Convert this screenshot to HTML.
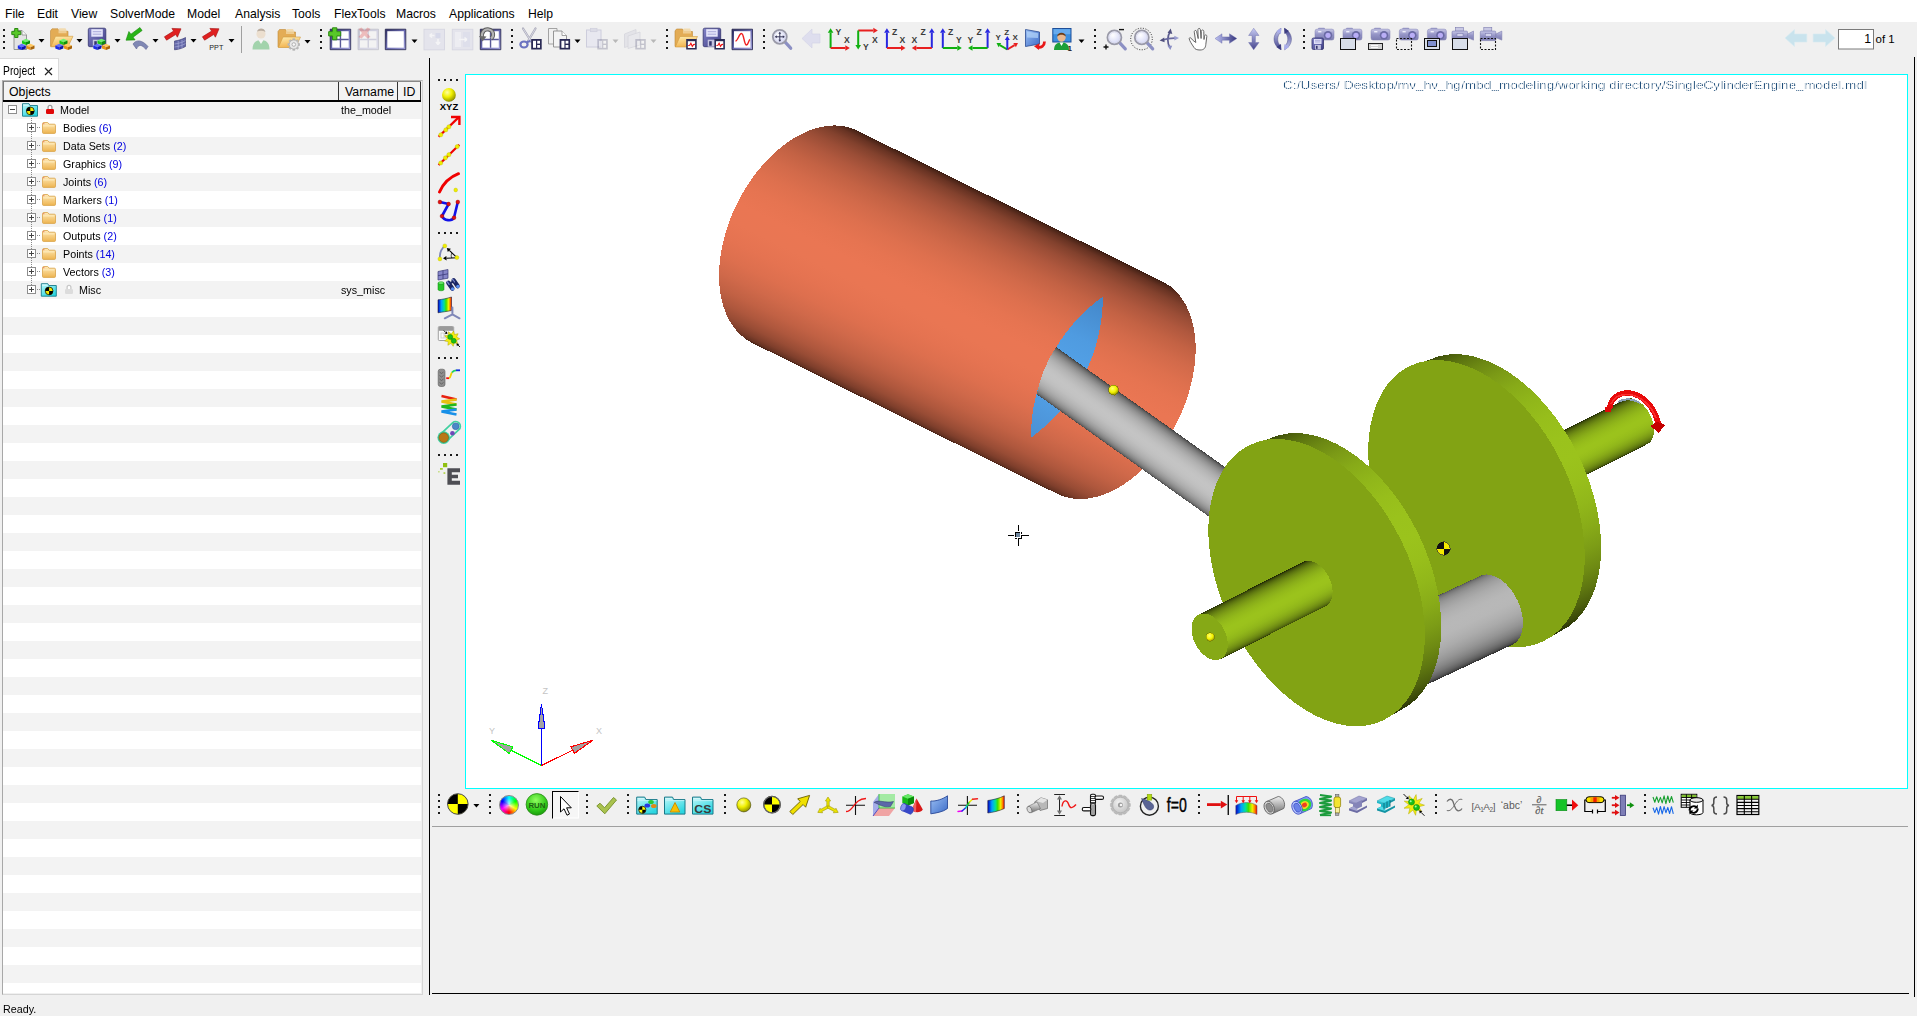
<!DOCTYPE html><html><head><meta charset="utf-8"><title>MotionView</title><style>
html,body{margin:0;padding:0;overflow:hidden;}
body{width:1917px;height:1016px;overflow:hidden;background:#f0f0f0;font-family:"Liberation Sans",sans-serif;position:relative;color:#000;}
.abs{position:absolute;}
.menubar{position:absolute;left:0;top:0;width:1917px;height:22px;background:#fff;}
.menubar span{position:absolute;top:6px;font-size:12.2px;line-height:16px;white-space:nowrap;color:#000;}
.tab{position:absolute;left:0;top:58px;width:59px;height:22px;background:#fff;border-right:1px solid #dadada;border-top:1px solid #dadada;box-sizing:border-box;}
.tab span{position:absolute;left:3px;top:5px;font-size:11.9px;line-height:14px;transform:scaleX(0.87);transform-origin:0 50%;}
.panel{position:absolute;left:2px;top:80px;width:421px;height:915px;border:1px solid #d5d5d5;border-left-color:#a8a8a8;border-top-color:#b8b8b8;box-sizing:border-box;background:#f0f0f0;}
.tree{position:absolute;left:3px;top:81px;width:418px;height:912px;background:repeating-linear-gradient(to bottom,#f3f3f3 0,#f3f3f3 18px,#fff 18px,#fff 36px);background-position:0 20px;}
.hdr{position:absolute;left:3px;top:81px;width:418px;height:19px;background:#f3f3f3;border-bottom:2px solid #000;box-sizing:content-box;}
.row{position:absolute;left:0;height:18px;font-size:11.8px;line-height:18px;white-space:nowrap;}
.row span{position:absolute;top:0;transform:scaleX(0.91);transform-origin:0 50%;}
.cnt{color:#0000e0;}
.status{position:absolute;left:3px;top:1003px;font-size:11.8px;line-height:13px;height:13px;transform:scaleX(0.91);transform-origin:0 50%;}
</style></head><body>
<div class="menubar">
<span style="left:5px">File</span>
<span style="left:37px">Edit</span>
<span style="left:71px">View</span>
<span style="left:110px">SolverMode</span>
<span style="left:187px">Model</span>
<span style="left:235px">Analysis</span>
<span style="left:292px">Tools</span>
<span style="left:334px">FlexTools</span>
<span style="left:396px">Macros</span>
<span style="left:449px">Applications</span>
<span style="left:528px">Help</span>
</div>
<div class="tab"><span>Project</span><svg class="abs" style="left:44px;top:8px" width="9" height="9"><path d="M1 1L8 8M8 1L1 8" stroke="#222" stroke-width="1.2" fill="none"/></svg></div>
<div class="panel"></div><div class="tree"></div>
<div class="hdr"></div>
<div class="abs" style="left:3px;top:81px;width:418px;height:1px;background:#888"></div>
<div class="abs" style="left:3px;top:81px;width:1px;height:19px;background:#777"></div>
<div class="abs" style="left:338px;top:82px;width:1px;height:18px;background:#333"></div>
<div class="abs" style="left:397px;top:82px;width:1px;height:18px;background:#333"></div>
<div class="abs" style="left:420px;top:82px;width:1px;height:18px;background:#333"></div>
<div class="abs" style="left:9px;top:85px;font-size:12.3px;line-height:15px">Objects</div>
<div class="abs" style="left:345px;top:85px;font-size:12.3px;line-height:15px">Varname</div>
<div class="abs" style="left:403px;top:85px;font-size:12.3px;line-height:15px">ID</div>
<div class="row" style="top:101px"><span style="left:60px">Model</span><span style="left:341px">the_model</span></div>
<div class="row" style="top:119px"><span style="left:63px">Bodies <b class="cnt" style="font-weight:normal">(6)</b></span></div>
<div class="row" style="top:137px"><span style="left:63px">Data Sets <b class="cnt" style="font-weight:normal">(2)</b></span></div>
<div class="row" style="top:155px"><span style="left:63px">Graphics <b class="cnt" style="font-weight:normal">(9)</b></span></div>
<div class="row" style="top:173px"><span style="left:63px">Joints <b class="cnt" style="font-weight:normal">(6)</b></span></div>
<div class="row" style="top:191px"><span style="left:63px">Markers <b class="cnt" style="font-weight:normal">(1)</b></span></div>
<div class="row" style="top:209px"><span style="left:63px">Motions <b class="cnt" style="font-weight:normal">(1)</b></span></div>
<div class="row" style="top:227px"><span style="left:63px">Outputs <b class="cnt" style="font-weight:normal">(2)</b></span></div>
<div class="row" style="top:245px"><span style="left:63px">Points <b class="cnt" style="font-weight:normal">(14)</b></span></div>
<div class="row" style="top:263px"><span style="left:63px">Vectors <b class="cnt" style="font-weight:normal">(3)</b></span></div>
<div class="row" style="top:281px"><span style="left:79px">Misc</span><span style="left:341px">sys_misc</span></div>
<svg class="abs" style="left:0;top:0" width="430" height="320" viewBox="0 0 430 320"><defs><linearGradient id="gtfold" x1="0" y1="0" x2="0" y2="1"><stop offset="0" stop-color="#ffeab8"/><stop offset="1" stop-color="#eeb450"/></linearGradient><linearGradient id="gcyanf" x1="0" y1="0" x2="0.6" y2="1"><stop offset="0" stop-color="#c0f8fa"/><stop offset="1" stop-color="#2cd6e0"/></linearGradient></defs><path d="M31.500 118 V286" stroke="#8a8a8a" stroke-width="1" stroke-dasharray="1 1"/><rect x="8.5" y="105.5" width="8" height="8" fill="#fff" stroke="#8e8e8e" stroke-width="1"/><path d="M10 109.5 h5" stroke="#444" stroke-width="1"/><path d="M22.5 103.7 h6.500 l1 1.800 h7.500 v10.700 h-15z" fill="url(#gcyanf)" stroke="#1a7a8a" stroke-width="0.900"/><path d="M23.3 104.5 h5 l0.800 1.500 h-5.800z" fill="#c8f4f8"/><circle cx="30.3" cy="110.9" r="3.9" fill="#f4e800"/><path d="M30.3 110.9 L26.400000000000002 110.9 A3.9 3.9 0 0 1 30.3 107.0 Z M30.3 110.9 L34.2 110.9 A3.9 3.9 0 0 1 30.3 114.80000000000001 Z" fill="#000"/><circle cx="30.3" cy="110.9" r="3.9" fill="none" stroke="#000" stroke-width="0.700"/><g opacity="1"><path d="M48.099999999999994 109.6 v-2.300 a1.900 2 0 0 1 3.800 0 v2.300" fill="#fff" stroke="#9c9c9c" stroke-width="1.300"/><rect x="46.0" y="108.89999999999999" width="8" height="5.200" rx="1.300" fill="#e00808"/></g><rect x="37" y="127" width="1" height="1" fill="#8a8a8a"/><rect x="39" y="127" width="1" height="1" fill="#8a8a8a"/><rect x="27.5" y="123.5" width="8" height="8" fill="#fff" stroke="#8e8e8e" stroke-width="1"/><path d="M29 127.5 h5" stroke="#444" stroke-width="1"/><path d="M31.5 125 v5" stroke="#444" stroke-width="1"/><path d="M42.5 123.9 q0 -1.400 1.400 -1.400 h3.800 l1.400 1.700 h5.200 q1.200 0 1.200 1.200 v7 q0 1 -1 1 h-11 q-1 0 -1 -1z" fill="url(#gtfold)" stroke="#d8a248" stroke-width="0.800"/><path d="M43.2 125.9 h11" stroke="#fff2cc" stroke-width="0.800"/><rect x="43.3" y="123.2" width="1" height="1" fill="#e05050"/><rect x="37" y="145" width="1" height="1" fill="#8a8a8a"/><rect x="39" y="145" width="1" height="1" fill="#8a8a8a"/><rect x="27.5" y="141.5" width="8" height="8" fill="#fff" stroke="#8e8e8e" stroke-width="1"/><path d="M29 145.5 h5" stroke="#444" stroke-width="1"/><path d="M31.5 143 v5" stroke="#444" stroke-width="1"/><path d="M42.5 141.9 q0 -1.400 1.400 -1.400 h3.800 l1.400 1.700 h5.200 q1.200 0 1.200 1.200 v7 q0 1 -1 1 h-11 q-1 0 -1 -1z" fill="url(#gtfold)" stroke="#d8a248" stroke-width="0.800"/><path d="M43.2 143.9 h11" stroke="#fff2cc" stroke-width="0.800"/><rect x="43.3" y="141.2" width="1" height="1" fill="#e05050"/><rect x="37" y="163" width="1" height="1" fill="#8a8a8a"/><rect x="39" y="163" width="1" height="1" fill="#8a8a8a"/><rect x="27.5" y="159.5" width="8" height="8" fill="#fff" stroke="#8e8e8e" stroke-width="1"/><path d="M29 163.5 h5" stroke="#444" stroke-width="1"/><path d="M31.5 161 v5" stroke="#444" stroke-width="1"/><path d="M42.5 159.9 q0 -1.400 1.400 -1.400 h3.800 l1.400 1.700 h5.200 q1.200 0 1.200 1.200 v7 q0 1 -1 1 h-11 q-1 0 -1 -1z" fill="url(#gtfold)" stroke="#d8a248" stroke-width="0.800"/><path d="M43.2 161.9 h11" stroke="#fff2cc" stroke-width="0.800"/><rect x="43.3" y="159.2" width="1" height="1" fill="#e05050"/><rect x="37" y="181" width="1" height="1" fill="#8a8a8a"/><rect x="39" y="181" width="1" height="1" fill="#8a8a8a"/><rect x="27.5" y="177.5" width="8" height="8" fill="#fff" stroke="#8e8e8e" stroke-width="1"/><path d="M29 181.5 h5" stroke="#444" stroke-width="1"/><path d="M31.5 179 v5" stroke="#444" stroke-width="1"/><path d="M42.5 177.9 q0 -1.400 1.400 -1.400 h3.800 l1.400 1.700 h5.200 q1.200 0 1.200 1.200 v7 q0 1 -1 1 h-11 q-1 0 -1 -1z" fill="url(#gtfold)" stroke="#d8a248" stroke-width="0.800"/><path d="M43.2 179.9 h11" stroke="#fff2cc" stroke-width="0.800"/><rect x="43.3" y="177.2" width="1" height="1" fill="#e05050"/><rect x="37" y="199" width="1" height="1" fill="#8a8a8a"/><rect x="39" y="199" width="1" height="1" fill="#8a8a8a"/><rect x="27.5" y="195.5" width="8" height="8" fill="#fff" stroke="#8e8e8e" stroke-width="1"/><path d="M29 199.5 h5" stroke="#444" stroke-width="1"/><path d="M31.5 197 v5" stroke="#444" stroke-width="1"/><path d="M42.5 195.9 q0 -1.400 1.400 -1.400 h3.800 l1.400 1.700 h5.200 q1.200 0 1.200 1.200 v7 q0 1 -1 1 h-11 q-1 0 -1 -1z" fill="url(#gtfold)" stroke="#d8a248" stroke-width="0.800"/><path d="M43.2 197.9 h11" stroke="#fff2cc" stroke-width="0.800"/><rect x="43.3" y="195.2" width="1" height="1" fill="#e05050"/><rect x="37" y="217" width="1" height="1" fill="#8a8a8a"/><rect x="39" y="217" width="1" height="1" fill="#8a8a8a"/><rect x="27.5" y="213.5" width="8" height="8" fill="#fff" stroke="#8e8e8e" stroke-width="1"/><path d="M29 217.5 h5" stroke="#444" stroke-width="1"/><path d="M31.5 215 v5" stroke="#444" stroke-width="1"/><path d="M42.5 213.9 q0 -1.400 1.400 -1.400 h3.800 l1.400 1.700 h5.200 q1.200 0 1.200 1.200 v7 q0 1 -1 1 h-11 q-1 0 -1 -1z" fill="url(#gtfold)" stroke="#d8a248" stroke-width="0.800"/><path d="M43.2 215.9 h11" stroke="#fff2cc" stroke-width="0.800"/><rect x="43.3" y="213.2" width="1" height="1" fill="#e05050"/><rect x="37" y="235" width="1" height="1" fill="#8a8a8a"/><rect x="39" y="235" width="1" height="1" fill="#8a8a8a"/><rect x="27.5" y="231.5" width="8" height="8" fill="#fff" stroke="#8e8e8e" stroke-width="1"/><path d="M29 235.5 h5" stroke="#444" stroke-width="1"/><path d="M31.5 233 v5" stroke="#444" stroke-width="1"/><path d="M42.5 231.9 q0 -1.400 1.400 -1.400 h3.800 l1.400 1.700 h5.200 q1.200 0 1.200 1.200 v7 q0 1 -1 1 h-11 q-1 0 -1 -1z" fill="url(#gtfold)" stroke="#d8a248" stroke-width="0.800"/><path d="M43.2 233.9 h11" stroke="#fff2cc" stroke-width="0.800"/><rect x="43.3" y="231.2" width="1" height="1" fill="#e05050"/><rect x="37" y="253" width="1" height="1" fill="#8a8a8a"/><rect x="39" y="253" width="1" height="1" fill="#8a8a8a"/><rect x="27.5" y="249.5" width="8" height="8" fill="#fff" stroke="#8e8e8e" stroke-width="1"/><path d="M29 253.5 h5" stroke="#444" stroke-width="1"/><path d="M31.5 251 v5" stroke="#444" stroke-width="1"/><path d="M42.5 249.9 q0 -1.400 1.400 -1.400 h3.800 l1.400 1.700 h5.200 q1.200 0 1.200 1.200 v7 q0 1 -1 1 h-11 q-1 0 -1 -1z" fill="url(#gtfold)" stroke="#d8a248" stroke-width="0.800"/><path d="M43.2 251.9 h11" stroke="#fff2cc" stroke-width="0.800"/><rect x="43.3" y="249.2" width="1" height="1" fill="#e05050"/><rect x="37" y="271" width="1" height="1" fill="#8a8a8a"/><rect x="39" y="271" width="1" height="1" fill="#8a8a8a"/><rect x="27.5" y="267.5" width="8" height="8" fill="#fff" stroke="#8e8e8e" stroke-width="1"/><path d="M29 271.5 h5" stroke="#444" stroke-width="1"/><path d="M31.5 269 v5" stroke="#444" stroke-width="1"/><path d="M42.5 267.9 q0 -1.400 1.400 -1.400 h3.800 l1.400 1.700 h5.200 q1.200 0 1.200 1.200 v7 q0 1 -1 1 h-11 q-1 0 -1 -1z" fill="url(#gtfold)" stroke="#d8a248" stroke-width="0.800"/><path d="M43.2 269.9 h11" stroke="#fff2cc" stroke-width="0.800"/><rect x="43.3" y="267.2" width="1" height="1" fill="#e05050"/><rect x="37" y="289" width="1" height="1" fill="#8a8a8a"/><rect x="39" y="289" width="1" height="1" fill="#8a8a8a"/><rect x="27.5" y="285.5" width="8" height="8" fill="#fff" stroke="#8e8e8e" stroke-width="1"/><path d="M29 289.5 h5" stroke="#444" stroke-width="1"/><path d="M31.5 287 v5" stroke="#444" stroke-width="1"/><path d="M41.3 283.7 h6.500 l1 1.800 h7.500 v10.700 h-15z" fill="url(#gcyanf)" stroke="#1a7a8a" stroke-width="0.900"/><path d="M42.099999999999994 284.5 h5 l0.800 1.500 h-5.800z" fill="#c8f4f8"/><circle cx="49.099999999999994" cy="290.9" r="3.9" fill="#f4e800"/><path d="M49.099999999999994 290.9 L45.199999999999996 290.9 A3.9 3.9 0 0 1 49.099999999999994 287.0 Z M49.099999999999994 290.9 L52.99999999999999 290.9 A3.9 3.9 0 0 1 49.099999999999994 294.79999999999995 Z" fill="#000"/><circle cx="49.099999999999994" cy="290.9" r="3.9" fill="none" stroke="#000" stroke-width="0.700"/><g opacity="1"><path d="M67.1 289.6 v-2.300 a1.900 2 0 0 1 3.800 0 v2.300" fill="#fff" stroke="#c8c8c8" stroke-width="1.300"/><rect x="65.0" y="288.90000000000003" width="8" height="5.200" rx="1.300" fill="#dcdcdc"/></g></svg>
<div class="abs" style="left:429px;top:58px;width:1px;height:937px;background:#000"></div>
<div class="abs" style="left:1914px;top:57px;width:1px;height:940px;background:#000"></div>
<div class="abs" style="left:432px;top:993px;width:1477px;height:1px;background:#000"></div>
<div class="abs" style="left:432px;top:826px;width:1476px;height:1px;background:#a0a0a0"></div>
<div class="abs" style="left:465px;top:74px;width:1443px;height:715px;box-sizing:border-box;border:1px solid #00ffff;background:#fff;overflow:hidden">
<svg class="abs" style="left:-466px;top:-75px" width="1917" height="1016" viewBox="0 0 1917 1016" shape-rendering="crispEdges">
<defs><linearGradient id="gcyl" gradientUnits="userSpaceOnUse" x1="1010.0" y1="206.1" x2="904.7" y2="418.4"><stop offset="0.0" stop-color="#3a1c12"/><stop offset="0.0062" stop-color="#4b2518"/><stop offset="0.0245" stop-color="#683323"/><stop offset="0.0545" stop-color="#82412d"/><stop offset="0.0955" stop-color="#9a4d36"/><stop offset="0.1464" stop-color="#b0583e"/><stop offset="0.2061" stop-color="#c36244"/><stop offset="0.273" stop-color="#d26a4a"/><stop offset="0.3455" stop-color="#de704e"/><stop offset="0.4218" stop-color="#e67451"/><stop offset="0.5" stop-color="#ea7653"/><stop offset="0.5782" stop-color="#e97653"/><stop offset="0.6545" stop-color="#e57351"/><stop offset="0.727" stop-color="#dd6f4e"/><stop offset="0.7939" stop-color="#d0694a"/><stop offset="0.8536" stop-color="#c16144"/><stop offset="0.9045" stop-color="#ae573d"/><stop offset="0.9455" stop-color="#984c35"/><stop offset="0.9755" stop-color="#7f3f2c"/><stop offset="0.9938" stop-color="#653222"/><stop offset="1.0" stop-color="#482317"/></linearGradient><linearGradient id="grod" gradientUnits="userSpaceOnUse" x1="1060.9" y1="350.2" x2="1031.9" y2="391.0"><stop offset="0.0" stop-color="#2c2c2c"/><stop offset="0.0062" stop-color="#3e3e3e"/><stop offset="0.0245" stop-color="#565656"/><stop offset="0.0545" stop-color="#6d6d6d"/><stop offset="0.0955" stop-color="#818181"/><stop offset="0.1464" stop-color="#949494"/><stop offset="0.2061" stop-color="#a4a4a4"/><stop offset="0.273" stop-color="#b1b1b1"/><stop offset="0.3455" stop-color="#bababa"/><stop offset="0.4218" stop-color="#c1c1c1"/><stop offset="0.5" stop-color="#c4c4c4"/><stop offset="0.5782" stop-color="#c3c3c3"/><stop offset="0.6545" stop-color="#bfbfbf"/><stop offset="0.727" stop-color="#b7b7b7"/><stop offset="0.7939" stop-color="#adadad"/><stop offset="0.8536" stop-color="#9f9f9f"/><stop offset="0.9045" stop-color="#8e8e8e"/><stop offset="0.9455" stop-color="#7b7b7b"/><stop offset="0.9755" stop-color="#656565"/><stop offset="0.9938" stop-color="#4e4e4e"/><stop offset="1.0" stop-color="#353535"/></linearGradient><linearGradient id="glens" gradientUnits="userSpaceOnUse" x1="1102.8" y1="296.6" x2="1030.9" y2="437.8"><stop offset="0" stop-color="#4386c8"/><stop offset="0.3" stop-color="#4f9be0"/><stop offset="0.6" stop-color="#55a4ea"/><stop offset="1" stop-color="#4a90d4"/></linearGradient><linearGradient id="grim1" gradientUnits="userSpaceOnUse" x1="1258.5" y1="441.1" x2="1392.7" y2="716.1"><stop offset="0.0" stop-color="#283205"/><stop offset="0.0062" stop-color="#394809"/><stop offset="0.0245" stop-color="#4b5e0c"/><stop offset="0.0545" stop-color="#5c7410"/><stop offset="0.0955" stop-color="#6c8813"/><stop offset="0.1464" stop-color="#7b9a16"/><stop offset="0.2061" stop-color="#87aa18"/><stop offset="0.273" stop-color="#90b61a"/><stop offset="0.3455" stop-color="#97be1b"/><stop offset="0.4218" stop-color="#9ac21c"/><stop offset="0.5" stop-color="#9bc31c"/><stop offset="0.5782" stop-color="#98bf1b"/><stop offset="0.6545" stop-color="#91b71a"/><stop offset="0.727" stop-color="#88ab18"/><stop offset="0.7939" stop-color="#7c9c16"/><stop offset="0.8536" stop-color="#6e8a13"/><stop offset="0.9045" stop-color="#5e7610"/><stop offset="0.9455" stop-color="#4d600d"/><stop offset="0.9755" stop-color="#3b4a09"/><stop offset="0.9938" stop-color="#2a3406"/><stop offset="1.0" stop-color="#222a04"/></linearGradient><linearGradient id="grim2" gradientUnits="userSpaceOnUse" x1="1418.4" y1="362.2" x2="1552.6" y2="637.2"><stop offset="0.0" stop-color="#283205"/><stop offset="0.0062" stop-color="#394809"/><stop offset="0.0245" stop-color="#4b5e0c"/><stop offset="0.0545" stop-color="#5c7410"/><stop offset="0.0955" stop-color="#6c8813"/><stop offset="0.1464" stop-color="#7b9a16"/><stop offset="0.2061" stop-color="#87aa18"/><stop offset="0.273" stop-color="#90b61a"/><stop offset="0.3455" stop-color="#97be1b"/><stop offset="0.4218" stop-color="#9ac21c"/><stop offset="0.5" stop-color="#9bc31c"/><stop offset="0.5782" stop-color="#98bf1b"/><stop offset="0.6545" stop-color="#91b71a"/><stop offset="0.727" stop-color="#88ab18"/><stop offset="0.7939" stop-color="#7c9c16"/><stop offset="0.8536" stop-color="#6e8a13"/><stop offset="0.9045" stop-color="#5e7610"/><stop offset="0.9455" stop-color="#4d600d"/><stop offset="0.9755" stop-color="#3b4a09"/><stop offset="0.9938" stop-color="#2a3406"/><stop offset="1.0" stop-color="#222a04"/></linearGradient><linearGradient id="gls" gradientUnits="userSpaceOnUse" x1="1198.6" y1="614.6" x2="1220.8" y2="659.0"><stop offset="0.0" stop-color="#1e2604"/><stop offset="0.0062" stop-color="#293406"/><stop offset="0.0245" stop-color="#3c4c0a"/><stop offset="0.0545" stop-color="#4f630d"/><stop offset="0.0955" stop-color="#607911"/><stop offset="0.1464" stop-color="#708d14"/><stop offset="0.2061" stop-color="#7e9e16"/><stop offset="0.273" stop-color="#89ad19"/><stop offset="0.3455" stop-color="#92b81a"/><stop offset="0.4218" stop-color="#98bf1b"/><stop offset="0.5" stop-color="#9bc31c"/><stop offset="0.5782" stop-color="#9bc21c"/><stop offset="0.6545" stop-color="#97be1b"/><stop offset="0.727" stop-color="#91b71a"/><stop offset="0.7939" stop-color="#88ab18"/><stop offset="0.8536" stop-color="#7c9c16"/><stop offset="0.9045" stop-color="#6e8b13"/><stop offset="0.9455" stop-color="#5e7710"/><stop offset="0.9755" stop-color="#4d610d"/><stop offset="0.9938" stop-color="#3a4909"/><stop offset="1.0" stop-color="#273106"/></linearGradient><linearGradient id="grs" gradientUnits="userSpaceOnUse" x1="1625.9" y1="399.0" x2="1648.3" y2="443.6"><stop offset="0.0" stop-color="#1e2604"/><stop offset="0.0062" stop-color="#293406"/><stop offset="0.0245" stop-color="#3c4c0a"/><stop offset="0.0545" stop-color="#4f630d"/><stop offset="0.0955" stop-color="#607911"/><stop offset="0.1464" stop-color="#708d14"/><stop offset="0.2061" stop-color="#7e9e16"/><stop offset="0.273" stop-color="#89ad19"/><stop offset="0.3455" stop-color="#92b81a"/><stop offset="0.4218" stop-color="#98bf1b"/><stop offset="0.5" stop-color="#9bc31c"/><stop offset="0.5782" stop-color="#9bc21c"/><stop offset="0.6545" stop-color="#97be1b"/><stop offset="0.727" stop-color="#91b71a"/><stop offset="0.7939" stop-color="#88ab18"/><stop offset="0.8536" stop-color="#7c9c16"/><stop offset="0.9045" stop-color="#6e8b13"/><stop offset="0.9455" stop-color="#5e7710"/><stop offset="0.9755" stop-color="#4d610d"/><stop offset="0.9938" stop-color="#3a4909"/><stop offset="1.0" stop-color="#273106"/></linearGradient><linearGradient id="gpin" gradientUnits="userSpaceOnUse" x1="1480.9" y1="575.6" x2="1513.1" y2="644.4"><stop offset="0.0" stop-color="#4d4d4d"/><stop offset="0.0062" stop-color="#626262"/><stop offset="0.0245" stop-color="#757575"/><stop offset="0.0545" stop-color="#868686"/><stop offset="0.0955" stop-color="#959595"/><stop offset="0.1464" stop-color="#a1a1a1"/><stop offset="0.2061" stop-color="#ababab"/><stop offset="0.273" stop-color="#b2b2b2"/><stop offset="0.3455" stop-color="#b7b7b7"/><stop offset="0.4218" stop-color="#b8b8b8"/><stop offset="0.5" stop-color="#b7b7b7"/><stop offset="0.5782" stop-color="#b2b2b2"/><stop offset="0.6545" stop-color="#ababab"/><stop offset="0.727" stop-color="#a1a1a1"/><stop offset="0.7939" stop-color="#959595"/><stop offset="0.8536" stop-color="#868686"/><stop offset="0.9045" stop-color="#757575"/><stop offset="0.9455" stop-color="#626262"/><stop offset="0.9755" stop-color="#4d4d4d"/><stop offset="0.9938" stop-color="#343434"/><stop offset="1.0" stop-color="#343434"/></linearGradient><radialGradient id="gy" cx="0.4" cy="0.35" r="0.7"><stop offset="0" stop-color="#ffff70"/><stop offset="0.55" stop-color="#f4f400"/><stop offset="1" stop-color="#8a8a00"/></radialGradient><linearGradient id="gred" x1="0" y1="0" x2="0" y2="1"><stop offset="0" stop-color="#ff2020"/><stop offset="1" stop-color="#d00000"/></linearGradient></defs>
<path d="M1527.6 448.4 L1625.9 399.0 A15.5 25 -26.7 0 1 1648.3 443.6 L1550.1 493.1 Z" fill="url(#grs)"/>
<path d="M1618 402 C1624 398.5 1632 398.5 1640 403" fill="none" stroke="#8aa0b8" stroke-width="2"/>
<path d="M1609.5 408.5 C1611 398 1619 392.5 1629 393 C1642 394 1654 406 1658.5 424" fill="none" stroke="#e80a0a" stroke-width="5.6" stroke-linecap="butt"/>
<path d="M1611 404 C1614 397 1621 394 1629 394.5 C1640 395.5 1651 405 1656 418" fill="none" stroke="#ff3838" stroke-width="1.6" opacity="0.8"/>
<path d="M1605 406.5 h6 v5 h-6 Z" fill="#e00808"/>
<path d="M1650.5 426 L1657 421.5 L1665.5 425 L1658.5 432.8 Z" fill="#c40000"/>
<path d="M1409.4 366.2 L1428.4 360.2 A150.7 93.1 64 0 1 1560.6 631.2 L1543.6 641.2 Z" fill="url(#grim2)"/>
<ellipse cx="1476.5" cy="503.7" rx="153" ry="94.5" transform="rotate(64 1476.5 503.7)" fill="#82a314"/>
<path d="M1372.2 626.3 L1480.9 575.6 A23.4 38 -25 0 1 1513.1 644.4 L1404.3 695.2 Z" fill="url(#gpin)"/>
<circle cx="1443.5" cy="548.5" r="6.6" fill="#f4ea00" stroke="#333" stroke-width="0.7"/>
<path d="M1443.5 548.5 L1436.9 548.5 A6.6 6.6 0 0 1 1443.5 541.9 Z M1443.5 548.5 L1450.1 548.5 A6.6 6.6 0 0 1 1443.5 555.1 Z" fill="#111"/>
<path d="M855.9 129.9 A118.5 75.5 116.4 0 0 750.5 342.1 L1058.8 494.6 A118.5 75.5 116.4 0 0 1164.2 282.4 Z" fill="url(#gcyl)"/>
<path d="M1102.8 296.6 A174 174 0 0 0 1030.9 437.8 A174 174 0 0 0 1102.8 296.6 Z" fill="url(#glens)"/>
<path d="M1056.0 347.0 L1243.5 480.2 L1224.3 527.5 L1036.8 394.3 Q1041.5 369.5 1056.0 347.0 Z" fill="url(#grod)"/>
<circle cx="1113.5" cy="390" r="5" fill="url(#gy)" stroke="#6b6b00" stroke-width="0.6"/>
<path d="M1249.5 445.1 L1268.5 439.1 A150.7 93.1 64 0 1 1400.7 710.1 L1383.7 720.1 Z" fill="url(#grim1)"/>
<ellipse cx="1316.6" cy="582.6" rx="153" ry="94.5" transform="rotate(64 1316.6 582.6)" fill="#82a314"/>
<path d="M1198.6 614.6 L1303.4 561.9 A16 24.8 -26.7 0 1 1325.6 606.3 L1220.8 659.0 A16 24.8 -26.7 0 1 1198.6 614.6 Z" fill="url(#gls)"/>
<ellipse cx="1209.7" cy="636.8" rx="16" ry="24.8" transform="rotate(-26.7 1209.7 636.8)" fill="#86a916"/>
<circle cx="1210.3" cy="637" r="4.2" fill="url(#gy)" stroke="#6b6b00" stroke-width="0.5"/>
<path d="M1018.5 525 V531 M1018.5 538.5 V546 M1008 535.5 H1014 M1021.5 535.5 H1029 M1021.5 535 V538.5 H1018 M1015 538.5 H1017 M1021.5 532 V534" stroke="#000" stroke-width="1" fill="none"/><rect x="1015.500" y="532.500" width="4.500" height="4.500" fill="#7088a0"/><path d="M1015 537 V532.500 H1020" stroke="#000" stroke-width="1" fill="none"/>
<path d="M541.5 765.5 V704" stroke="#0000ff" stroke-width="1.1"/><path d="M541.5 765.5 L592.7 740.3" stroke="#ff0000" stroke-width="1.1"/><path d="M541.5 765.5 L491.2 740.3" stroke="#00ff00" stroke-width="1.1"/><path d="M541.5 704.5 L545 728.3 H538 Z" fill="#a2a2a2" stroke="#0000ff" stroke-width="1.1" stroke-linejoin="round"/><path d="M592.7 740.3 L574.500 753.300 L570.800 746.800 Z" fill="#a2a2a2" stroke="#ff0000" stroke-width="1.1" stroke-linejoin="round"/><path d="M491.2 740.3 L512.800 746.800 L509.300 753.500 Z" fill="#a2a2a2" stroke="#00ff00" stroke-width="1.1" stroke-linejoin="round"/><text x="542.5" y="694" font-size="9" fill="#c4c4c4" font-family="Liberation Sans, sans-serif">Z</text><text x="596" y="734" font-size="9" fill="#c4c4c4" font-family="Liberation Sans, sans-serif">X</text><text x="489" y="734" font-size="9" fill="#c4c4c4" font-family="Liberation Sans, sans-serif">Y</text>
<defs><pattern id="stp" width="2" height="3" patternUnits="userSpaceOnUse"><rect width="1.15" height="3" fill="#fff"/><rect x="1.15" width="0.85" height="3" fill="#444"/></pattern><mask id="mtxt"><rect x="1278" y="76" width="600" height="20" fill="url(#stp)"/></mask></defs>
<text x="1283" y="89" font-size="11.5" fill="#1f4e79" font-family="Liberation Sans, sans-serif" textLength="584" lengthAdjust="spacingAndGlyphs" mask="url(#mtxt)">C:/Users/  Desktop/mv_hv_hg/mbd_modeling/working directory/SingleCylinderEngine_model.mdl</text>
</svg>
</div>
<svg class="abs" style="left:0;top:0" width="1917" height="1016" viewBox="0 0 1917 1016"><defs>
<linearGradient id="gfold" x1="0" y1="0" x2="0.3" y2="1"><stop offset="0" stop-color="#ffedb0"/><stop offset="1" stop-color="#f2b450"/></linearGradient>
<linearGradient id="gflop" x1="0" y1="0" x2="1" y2="1"><stop offset="0" stop-color="#8484c8"/><stop offset="1" stop-color="#3c3c84"/></linearGradient>
<linearGradient id="gframe" x1="0" y1="0" x2="1" y2="1"><stop offset="0" stop-color="#34346a"/><stop offset="0.5" stop-color="#6a6ab0"/><stop offset="1" stop-color="#9c9cd4"/></linearGradient>
<radialGradient id="gmag" cx="0.4" cy="0.35" r="0.8"><stop offset="0" stop-color="#ffffff"/><stop offset="1" stop-color="#c8ccf4"/></radialGradient>
<linearGradient id="gcam" x1="0" y1="0" x2="0" y2="1"><stop offset="0" stop-color="#c6c6e6"/><stop offset="0.5" stop-color="#9494c6"/><stop offset="1" stop-color="#7c7cb0"/></linearGradient>
<linearGradient id="gpur" x1="0" y1="0" x2="1" y2="1"><stop offset="0" stop-color="#b4b8ec"/><stop offset="1" stop-color="#4c4c94"/></linearGradient>
<linearGradient id="gpurv" x1="0" y1="0" x2="0" y2="1"><stop offset="0" stop-color="#c8ccf4"/><stop offset="1" stop-color="#44448c"/></linearGradient><linearGradient id="gpurv2" x1="0" y1="0" x2="0" y2="1"><stop offset="0" stop-color="#44448c"/><stop offset="1" stop-color="#c8ccf4"/></linearGradient><linearGradient id="gpurh" x1="0" y1="0" x2="1" y2="0"><stop offset="0" stop-color="#c0c4f4"/><stop offset="1" stop-color="#34347c"/></linearGradient>
<radialGradient id="gysph" cx="0.38" cy="0.32" r="0.75"><stop offset="0" stop-color="#ffffa0"/><stop offset="0.45" stop-color="#f0f000"/><stop offset="0.85" stop-color="#a0a000"/><stop offset="1" stop-color="#5a5a00"/></radialGradient>
<linearGradient id="grain" x1="0" y1="0" x2="1" y2="0"><stop offset="0" stop-color="#0000c0"/><stop offset="0.25" stop-color="#00a0ff"/><stop offset="0.45" stop-color="#00e0a0"/><stop offset="0.6" stop-color="#40e000"/><stop offset="0.78" stop-color="#f0f000"/><stop offset="0.9" stop-color="#ff8000"/><stop offset="1" stop-color="#f00000"/></linearGradient>
<linearGradient id="grainv" x1="0" y1="0" x2="0" y2="1"><stop offset="0" stop-color="#f02000"/><stop offset="0.3" stop-color="#f0e000"/><stop offset="0.55" stop-color="#20d020"/><stop offset="0.8" stop-color="#00b0f0"/><stop offset="1" stop-color="#0030d0"/></linearGradient>
<linearGradient id="gcyanf" x1="0" y1="0" x2="0" y2="1"><stop offset="0" stop-color="#b4f2f6"/><stop offset="1" stop-color="#26bccc"/></linearGradient><radialGradient id="ggear" cx="0.4" cy="0.35" r="0.8"><stop offset="0" stop-color="#f2f2f2"/><stop offset="1" stop-color="#bdbdbd"/></radialGradient>
<linearGradient id="gtfold" x1="0" y1="0" x2="0" y2="1"><stop offset="0" stop-color="#ffe9b0"/><stop offset="1" stop-color="#eeb048"/></linearGradient>
<radialGradient id="grun" cx="0.45" cy="0.3" r="0.8"><stop offset="0" stop-color="#90ff60"/><stop offset="0.6" stop-color="#30c818"/><stop offset="1" stop-color="#108808"/></radialGradient>
<linearGradient id="ggray" x1="0" y1="0" x2="0" y2="1"><stop offset="0" stop-color="#f0f0f0"/><stop offset="0.5" stop-color="#b0b0b0"/><stop offset="1" stop-color="#707070"/></linearGradient>
<linearGradient id="gblue" x1="0" y1="0" x2="1" y2="1"><stop offset="0" stop-color="#9cc0f4"/><stop offset="1" stop-color="#3c6cc8"/></linearGradient>
</defs><rect x="3" y="29" width="2" height="2" fill="#1a1a1a"/><rect x="3" y="35" width="2" height="2" fill="#1a1a1a"/><rect x="3" y="41" width="2" height="2" fill="#1a1a1a"/><rect x="3" y="47" width="2" height="2" fill="#1a1a1a"/>
<path d="M14 30.5 h8 l4.5 4.5 v14.5 h-12.5 Z" fill="#e4e4e4" stroke="#8c8c8c" stroke-width="0.9"/><path d="M22 30.5 v4.5 h4.5" fill="#f8f8f8" stroke="#8c8c8c" stroke-width="0.8"/>
<path d="M14.680000000000001 28.5 h3.2399999999999993 v2.8800000000000003 h2.8800000000000003 v3.2399999999999993 h-2.8800000000000003 v2.8800000000000003 h-3.2399999999999993 v-2.8800000000000003 h-2.8800000000000003 v-3.2399999999999993 h2.8800000000000003 Z" fill="#58c828" stroke="#2c8a12" stroke-width="1" stroke-linejoin="round"/>
<path d="M26 38.8 L30 40.5 L26 42.199999999999996 L22 40.5 Z" fill="#70f070"/><path d="M22 40.5 L26 42.199999999999996 V45.099999999999994 L22 43.4 Z" fill="#18c818"/><path d="M26 42.199999999999996 L30 40.5 V43.4 L26 45.099999999999994 Z" fill="#0a8f0a"/><path d="M21.8 43.8 L25.8 45.5 L21.8 47.199999999999996 L17.8 45.5 Z" fill="#6070ff"/><path d="M17.8 45.5 L21.8 47.199999999999996 V50.099999999999994 L17.8 48.4 Z" fill="#1828e8"/><path d="M21.8 47.199999999999996 L25.8 45.5 V48.4 L21.8 50.099999999999994 Z" fill="#0c14a8"/><path d="M30.5 43.8 L34.5 45.5 L30.5 47.199999999999996 L26.5 45.5 Z" fill="#ffc860"/><path d="M26.5 45.5 L30.5 47.199999999999996 V50.099999999999994 L26.5 48.4 Z" fill="#e8941a"/><path d="M30.5 47.199999999999996 L34.5 45.5 V48.4 L30.5 50.099999999999994 Z" fill="#a8640a"/>
<path d="M38.5 39 H44.5 L41.5 42.5 Z" fill="#000"/>
<g opacity="1"><path d="M50.5 30.8 l1.5 -2 h6 l1.5 2.5 h8.5 v15 h-17.5 Z" fill="#e3ac55" stroke="#c08a38" stroke-width="0.6"/><path d="M58.5 29.3 l1 -1 h6 l1 2 v3 h-8z" fill="#f3d6a0" opacity="0.8"/><path d="M50.8 46.8 L55.5 36.3 H73.0 L68.0 46.8 Z" fill="url(#gfold)" stroke="#d09a40" stroke-width="0.6"/></g>
<path d="M63.5 38.8 L67.5 40.5 L63.5 42.199999999999996 L59.5 40.5 Z" fill="#70f070"/><path d="M59.5 40.5 L63.5 42.199999999999996 V45.099999999999994 L59.5 43.4 Z" fill="#18c818"/><path d="M63.5 42.199999999999996 L67.5 40.5 V43.4 L63.5 45.099999999999994 Z" fill="#0a8f0a"/><path d="M59.3 43.8 L63.3 45.5 L59.3 47.199999999999996 L55.3 45.5 Z" fill="#6070ff"/><path d="M55.3 45.5 L59.3 47.199999999999996 V50.099999999999994 L55.3 48.4 Z" fill="#1828e8"/><path d="M59.3 47.199999999999996 L63.3 45.5 V48.4 L59.3 50.099999999999994 Z" fill="#0c14a8"/><path d="M68.0 43.8 L72.0 45.5 L68.0 47.199999999999996 L64.0 45.5 Z" fill="#ffc860"/><path d="M64.0 45.5 L68.0 47.199999999999996 V50.099999999999994 L64.0 48.4 Z" fill="#e8941a"/><path d="M68.0 47.199999999999996 L72.0 45.5 V48.4 L68.0 50.099999999999994 Z" fill="#a8640a"/>
<path d="M76.5 39 H82.5 L79.5 42.5 Z" fill="#000"/>
<rect x="88.3" y="28.2" width="17.5" height="18.5" rx="1.5" fill="url(#gflop)" stroke="#34346e" stroke-width="0.8"/><rect x="91.3" y="29.2" width="11.5" height="7.5" fill="#e6e6fb"/><path d="M92.8 31.7 h8.5 M92.8 34.2 h8.5" stroke="#9a9ad0" stroke-width="0.8"/><rect x="92.8" y="39.7" width="9.0" height="7.0" fill="#c4c4e0"/><rect x="94.3" y="41.2" width="2.5" height="4.5" fill="#34346e"/>
<path d="M101.5 38.8 L105.5 40.5 L101.5 42.199999999999996 L97.5 40.5 Z" fill="#70f070"/><path d="M97.5 40.5 L101.5 42.199999999999996 V45.099999999999994 L97.5 43.4 Z" fill="#18c818"/><path d="M101.5 42.199999999999996 L105.5 40.5 V43.4 L101.5 45.099999999999994 Z" fill="#0a8f0a"/><path d="M97.3 43.8 L101.3 45.5 L97.3 47.199999999999996 L93.3 45.5 Z" fill="#6070ff"/><path d="M93.3 45.5 L97.3 47.199999999999996 V50.099999999999994 L93.3 48.4 Z" fill="#1828e8"/><path d="M97.3 47.199999999999996 L101.3 45.5 V48.4 L97.3 50.099999999999994 Z" fill="#0c14a8"/><path d="M106.0 43.8 L110.0 45.5 L106.0 47.199999999999996 L102.0 45.5 Z" fill="#ffc860"/><path d="M102.0 45.5 L106.0 47.199999999999996 V50.099999999999994 L102.0 48.4 Z" fill="#e8941a"/><path d="M106.0 47.199999999999996 L110.0 45.5 V48.4 L106.0 50.099999999999994 Z" fill="#a8640a"/>
<path d="M114.5 39 H120.5 L117.5 42.5 Z" fill="#000"/>
<path d="M139.9 27.5 L130.9 34.2 L128.9 31.5 L126.0 40.2 L135.1 39.9 L133.1 37.2 L142.1 30.5 Z" fill="#28b418" stroke="#188808" stroke-width="0.6"/>
<path d="M133 44 C136 39.5 142 39.5 148 46.5 L146 49.5 C142 44.5 138.5 44 136.5 49 Z" fill="#8088b4" stroke="#5a6090" stroke-width="0.6"/>
<path d="M152.5 39 H158.5 L155.5 42.5 Z" fill="#000"/>
<path d="M166.6 40.2 L175.7 34.5 L177.4 37.2 L181.0 28.8 L171.9 28.4 L173.6 31.1 L164.4 36.8 Z" fill="#e02020" stroke="#a01010" stroke-width="0.6"/>
<path d="M174.5 41 C178 40.5 182 39.5 185.5 37.5 V46.5 C182 48.5 178 49.5 174.5 49.8 Z" fill="#6468a8" stroke="#34346e" stroke-width="0.6"/><path d="M174.5 44 C178 43.6 182 42.6 185.5 40.6 M174.5 47 C178 46.6 182 45.6 185.5 43.6 M178.2 40.8 V49.4 M182 39.8 V48.3" stroke="#b0b4e0" stroke-width="0.6" fill="none"/>
<path d="M190.5 39 H196.5 L193.5 42.5 Z" fill="#000"/>
<path d="M204.6 40.2 L213.7 34.5 L215.4 37.2 L219.0 28.8 L209.9 28.4 L211.6 31.1 L202.4 36.8 Z" fill="#e02020" stroke="#a01010" stroke-width="0.6"/>
<text x="209.3" y="49.9" font-size="6.6" fill="#222" font-family="Liberation Sans, sans-serif" textLength="14" lengthAdjust="spacingAndGlyphs">PPT</text>
<path d="M228.5 39 H234.5 L231.5 42.5 Z" fill="#000"/>
<rect x="241" y="26" width="1" height="27" fill="#a0a0a0"/>
<g opacity="0.4"><circle cx="261" cy="34" r="4.6" fill="#e8c8a0"/><path d="M257 31.5 C258 27.5 264.5 27.5 265.5 32 C263 30.5 260 30.5 257 31.5Z" fill="#6a4a2a"/><path d="M252.5 49.5 C252.5 42 256.5 40 261 40 C265.5 40 269.5 42 269.5 49.5 Z" fill="#30a848"/><path d="M258.5 40 L261 44 L263.5 40Z" fill="#fff"/></g>
<g opacity="1"><path d="M278 31.5 l1.5 -2 h6 l1.5 2.5 h8.5 v15 h-17.5 Z" fill="#e3ac55" stroke="#c08a38" stroke-width="0.6"/><path d="M286 30 l1 -1 h6 l1 2 v3 h-8z" fill="#f3d6a0" opacity="0.8"/><path d="M278.3 47.5 L283 37 H300.5 L295.5 47.5 Z" fill="url(#gfold)" stroke="#d09a40" stroke-width="0.6"/></g>
<rect x="292.5" y="38.3" width="2.6" height="12.4" fill="#b8b8b8" transform="rotate(0 293.8 44.5)"/><rect x="292.5" y="38.3" width="2.6" height="12.4" fill="#b8b8b8" transform="rotate(45 293.8 44.5)"/><rect x="292.5" y="38.3" width="2.6" height="12.4" fill="#b8b8b8" transform="rotate(90 293.8 44.5)"/><rect x="292.5" y="38.3" width="2.6" height="12.4" fill="#b8b8b8" transform="rotate(135 293.8 44.5)"/><circle cx="293.8" cy="44.5" r="4.6" fill="#e8e8e8" stroke="#a8a8a8" stroke-width="0.8"/><circle cx="293.8" cy="44.5" r="1.8" fill="#f8f8f8" stroke="#999" stroke-width="0.7"/>
<path d="M304.5 40 H310.5 L307.5 43.5 Z" fill="#000"/>
<rect x="320" y="29" width="2" height="2" fill="#1a1a1a"/><rect x="320" y="35" width="2" height="2" fill="#1a1a1a"/><rect x="320" y="41" width="2" height="2" fill="#1a1a1a"/><rect x="320" y="47" width="2" height="2" fill="#1a1a1a"/>
<g opacity="1"><rect x="331.2" y="30.2" width="18.5" height="18.5" fill="#fff" stroke="url(#gframe)" stroke-width="2"/><path d="M330.2 29.2 H350.7 M330.2 29.2 V49.7" stroke="#22224a" stroke-width="0.8" fill="none"/><path d="M350.7 29.2 V49.7 H330.2" stroke="#22224a" stroke-width="0.8" fill="none"/><path d="M340.45 31.2 V47.7 M332.2 39.45 H348.7" stroke="#5a5a98" stroke-width="1.4"/></g>
<path d="M332.53999999999996 27.8 h4.32 v3.84 h3.84 v4.32 h-3.84 v3.84 h-4.32 v-3.84 h-3.84 v-4.32 h3.84 Z" fill="#58c828" stroke="#2c8a12" stroke-width="1" stroke-linejoin="round"/>
<g opacity="0.22"><rect x="359" y="30.2" width="18.5" height="18.5" fill="#fff" stroke="url(#gframe)" stroke-width="2"/><path d="M358 29.2 H378.5 M358 29.2 V49.7" stroke="#22224a" stroke-width="0.8" fill="none"/><path d="M378.5 29.2 V49.7 H358" stroke="#22224a" stroke-width="0.8" fill="none"/><path d="M368.25 31.2 V47.7 M360 39.45 H376.5" stroke="#5a5a98" stroke-width="1.4"/></g>
<path d="M358.5 29 l3 -1.5 l3 3 l3 -3 l3 1.5 l-3.5 4 l3.5 4 l-3 1.5 l-3 -3 l-3 3 l-3 -1.5 l3.5 -4z" fill="#e03030" opacity="0.28"/>
<g opacity="1"><rect x="386.3" y="30.2" width="18.5" height="18.5" fill="#fff" stroke="url(#gframe)" stroke-width="2"/><path d="M385.3 29.2 H405.8 M385.3 29.2 V49.7" stroke="#22224a" stroke-width="0.8" fill="none"/><path d="M405.8 29.2 V49.7 H385.3" stroke="#22224a" stroke-width="0.8" fill="none"/></g>
<path d="M411.5 39.5 H417.5 L414.5 43.0 Z" fill="#000"/>
<g opacity="0.55"><rect x="424" y="29.3" width="20.5" height="20.5" fill="#dcdcea" stroke="#c4c4d8" stroke-width="1"/><rect x="435.5" y="33" width="5" height="5" fill="#c4c8e4"/><path d="M434.5 35.5 h-5 m0 0 l2.5 -2 m-2.5 2 l2.5 2 M438 39 v5.5 m0 0 l-2 -2.5 m2 2.5 l2 -2.5" stroke="#f8f8fc" stroke-width="1.6" fill="none"/></g>
<g opacity="0.55"><rect x="452.3" y="29.3" width="20.5" height="20.5" fill="#dcdcea" stroke="#c4c4d8" stroke-width="1"/><rect x="455" y="32" width="6" height="15" fill="#ebebf4"/><rect x="463" y="32" width="7" height="15" fill="#d0d2e8"/><path d="M459 39.5 h8 m0 0 l-2.5 -2 m2.5 2 l-2.5 2" stroke="#f8f8fc" stroke-width="1.6" fill="none"/></g>
<g opacity="1"><rect x="481.3" y="30.2" width="18.5" height="18.5" fill="#fff" stroke="url(#gframe)" stroke-width="2"/><path d="M480.3 29.2 H500.8 M480.3 29.2 V49.7" stroke="#22224a" stroke-width="0.8" fill="none"/><path d="M500.8 29.2 V49.7 H480.3" stroke="#22224a" stroke-width="0.8" fill="none"/><path d="M490.55 31.2 V47.7 M482.3 39.45 H498.8" stroke="#5a5a98" stroke-width="1.4"/></g>
<path d="M482.5 38 C480.5 32 485 28.5 489 29.5 C493.5 30.5 494.5 36 491 38.5" fill="none" stroke="#5a5a5a" stroke-width="4"/><path d="M482.5 38 C480.5 32 485 28.5 489 29.5 C493.5 30.5 494.5 36 491 38.5" fill="none" stroke="#b4b4b4" stroke-width="2.2"/><path d="M479 36 L486.5 36.5 L482.5 41.5 Z" fill="#6a6a6a"/>
<rect x="511" y="29" width="2" height="2" fill="#1a1a1a"/><rect x="511" y="35" width="2" height="2" fill="#1a1a1a"/><rect x="511" y="41" width="2" height="2" fill="#1a1a1a"/><rect x="511" y="47" width="2" height="2" fill="#1a1a1a"/>
<path d="M523 28.5 L531.5 42 M535.5 28.5 L527.5 42" stroke="#a8a8b8" stroke-width="2.2" stroke-linecap="round"/><path d="M523 28.5 L531.5 42 M535.5 28.5 L527.5 42" stroke="#e4e4ee" stroke-width="0.8"/><ellipse cx="524" cy="44.5" rx="3.6" ry="3" fill="none" stroke="#6a72c0" stroke-width="2.2"/><path d="M527 42 l3.5 -1" stroke="#6a72c0" stroke-width="2"/>
<g opacity="1"><rect x="531.2" y="39" width="10.5" height="10.5" fill="#2a2a55"/><rect x="533.0" y="40.8" width="3" height="7" fill="#fff"/><rect x="537.2" y="40.8" width="2.8" height="2.8" fill="#fff"/><rect x="537.2" y="45" width="2.8" height="2.8" fill="#fff"/></g>
<path d="M548.5 28.5 h8.5 v15.5 h-8.5z" fill="#f0f0f0" stroke="#9a9a9a" stroke-width="0.9"/><path d="M553.5 31 h8.5 l4.5 4.5 v11.5 h-13z" fill="#f4f4f4" stroke="#8c8c8c" stroke-width="0.9"/><path d="M562 31 v4.5 h4.5" fill="#fff" stroke="#8c8c8c" stroke-width="0.8"/>
<g opacity="1"><rect x="559.6" y="39" width="10.5" height="10.5" fill="#2a2a55"/><rect x="561.4" y="40.8" width="3" height="7" fill="#fff"/><rect x="565.6" y="40.8" width="2.8" height="2.8" fill="#fff"/><rect x="565.6" y="45" width="2.8" height="2.8" fill="#fff"/></g>
<path d="M574.5 39.5 H580.5 L577.5 43.0 Z" fill="#000"/>
<g opacity="0.3"><rect x="586.5" y="30" width="14.5" height="17" fill="#d8d8f0" stroke="#8080b0" stroke-width="1"/><rect x="590.5" y="28.3" width="6.5" height="3.4" fill="#b0b0d0" stroke="#8080b0" stroke-width="0.7"/></g>
<g opacity="0.22"><rect x="597.3" y="39" width="10.5" height="10.5" fill="#2a2a55"/><rect x="599.0999999999999" y="40.8" width="3" height="7" fill="#fff"/><rect x="603.3" y="40.8" width="2.8" height="2.8" fill="#fff"/><rect x="603.3" y="45" width="2.8" height="2.8" fill="#fff"/></g>
<path d="M612.5 39.5 H618.5 L615.5 43.0 Z" fill="#b8b8b8"/>
<g opacity="0.3"><path d="M624.5 34 L636 29.5 V44 L624.5 47.5Z" fill="#c8c8d8" stroke="#9a9ab0" stroke-width="0.8"/><path d="M628 36 L640 32 V45 L628 48.5Z" fill="#d8d8e4" stroke="#9a9ab0" stroke-width="0.8"/></g>
<g opacity="0.22"><rect x="635.3" y="39" width="10.5" height="10.5" fill="#2a2a55"/><rect x="637.0999999999999" y="40.8" width="3" height="7" fill="#fff"/><rect x="641.3" y="40.8" width="2.8" height="2.8" fill="#fff"/><rect x="641.3" y="45" width="2.8" height="2.8" fill="#fff"/></g>
<path d="M650.5 39.5 H656.5 L653.5 43.0 Z" fill="#b8b8b8"/>
<rect x="666" y="29" width="2" height="2" fill="#1a1a1a"/><rect x="666" y="35" width="2" height="2" fill="#1a1a1a"/><rect x="666" y="41" width="2" height="2" fill="#1a1a1a"/><rect x="666" y="47" width="2" height="2" fill="#1a1a1a"/>
<g opacity="1"><path d="M675 31.0 l1.5 -2 h6 l1.5 2.5 h8.5 v15 h-17.5 Z" fill="#e3ac55" stroke="#c08a38" stroke-width="0.6"/><path d="M683 29.5 l1 -1 h6 l1 2 v3 h-8z" fill="#f3d6a0" opacity="0.8"/><path d="M675.3 47.0 L680 36.5 H697.5 L692.5 47.0 Z" fill="url(#gfold)" stroke="#d09a40" stroke-width="0.6"/></g>
<rect x="686.2" y="39" width="10.5" height="10.5" fill="#2a2a55"/><rect x="687.8000000000001" y="41.2" width="7.3" height="6.8" fill="#fff"/><path d="M688.2 45.5 l1.5 -0.3 l1.2 -2 l1.4 3.2 l1.2 -1.8 l1.4 -0.2" stroke="#f01010" stroke-width="1.1" fill="none"/>
<rect x="703.2" y="28.2" width="17.5" height="18.5" rx="1.5" fill="url(#gflop)" stroke="#34346e" stroke-width="0.8"/><rect x="706.2" y="29.2" width="11.5" height="7.5" fill="#e6e6fb"/><path d="M707.7 31.7 h8.5 M707.7 34.2 h8.5" stroke="#9a9ad0" stroke-width="0.8"/><rect x="707.7" y="39.7" width="9.0" height="7.0" fill="#c4c4e0"/><rect x="709.2" y="41.2" width="2.5" height="4.5" fill="#34346e"/>
<rect x="714.4" y="39" width="10.5" height="10.5" fill="#2a2a55"/><rect x="716.0" y="41.2" width="7.3" height="6.8" fill="#fff"/><path d="M716.4 45.5 l1.5 -0.3 l1.2 -2 l1.4 3.2 l1.2 -1.8 l1.4 -0.2" stroke="#f01010" stroke-width="1.1" fill="none"/>
<g opacity="1"><rect x="733" y="30.2" width="18.5" height="18.5" fill="#fff" stroke="url(#gframe)" stroke-width="2"/><path d="M732 29.2 H752.5 M732 29.2 V49.7" stroke="#22224a" stroke-width="0.8" fill="none"/><path d="M752.5 29.2 V49.7 H732" stroke="#22224a" stroke-width="0.8" fill="none"/></g>
<path d="M735.5 41 C738 41 739 33.5 741.5 33.5 C744 33.5 744 45 746.5 45 C748.5 45 748.5 40 750 39.5" stroke="#f02020" stroke-width="1.4" fill="none"/>
<rect x="763" y="29" width="2" height="2" fill="#1a1a1a"/><rect x="763" y="35" width="2" height="2" fill="#1a1a1a"/><rect x="763" y="41" width="2" height="2" fill="#1a1a1a"/><rect x="763" y="47" width="2" height="2" fill="#1a1a1a"/>
<path d="M784.6999999999999 41.699999999999996 L790.6999999999999 48.199999999999996" stroke="#8c90c4" stroke-width="3.2" stroke-linecap="round"/><circle cx="779.8" cy="36.8" r="7" fill="url(#gmag)" stroke="#9a9aa8" stroke-width="1.8"/><circle cx="779.8" cy="36.8" r="5.4" fill="none" stroke="#d8d8e8" stroke-width="0.8"/>
<path d="M775.3 36.8 H784.3 M779.8 32.3 V41.3" stroke="#3a3a5a" stroke-width="1"/><path d="M775 36.8 l1.8 -1.5 v3z M784.6 36.8 l-1.8 -1.5 v3z M779.8 32 l-1.5 1.8 h3z M779.8 41.6 l-1.5 -1.8 h3z" fill="#3a3a5a"/>
<path d="M802 38.5 L812 29 V34 H820 V43 H812 V48 Z" fill="#dedeee" stroke="#d2d2e6" stroke-width="0.6"/>
<path d="M830.6 48.0 L830.6 32.7" stroke="#10b010" stroke-width="2.0"/><path d="M830.6 28.2 L833.4 32.7 L827.8 32.7 Z" fill="#10b010"/>
<path d="M830.6 48.0 L845.3 48.0" stroke="#e82020" stroke-width="2.0"/><path d="M849.8 48.0 L845.3 50.8 L845.3 45.2 Z" fill="#e82020"/>
<text x="835.5" y="35" font-size="8.6" font-weight="bold" fill="#3a3a3a" font-family="Liberation Sans, sans-serif">Y</text>
<text x="844" y="43" font-size="8.6" font-weight="bold" fill="#3a3a3a" font-family="Liberation Sans, sans-serif">X</text>
<path d="M858.2 30.5 L873.3 30.5" stroke="#e82020" stroke-width="2.0"/><path d="M877.8 30.5 L873.3 33.3 L873.3 27.7 Z" fill="#e82020"/>
<path d="M858.2 30.5 L858.2 45.0" stroke="#10b010" stroke-width="2.0"/><path d="M858.2 49.5 L855.4 45.0 L861.0 45.0 Z" fill="#10b010"/>
<text x="872" y="42.5" font-size="8.6" font-weight="bold" fill="#3a3a3a" font-family="Liberation Sans, sans-serif">X</text>
<text x="863" y="50" font-size="8.6" font-weight="bold" fill="#3a3a3a" font-family="Liberation Sans, sans-serif">Y</text>
<path d="M886.9 48.0 L886.9 32.7" stroke="#2828e0" stroke-width="2.0"/><path d="M886.9 28.2 L889.7 32.7 L884.1 32.7 Z" fill="#2828e0"/>
<path d="M886.9 48.0 L901.0 48.0" stroke="#e82020" stroke-width="2.0"/><path d="M905.5 48.0 L901.0 50.8 L901.0 45.2 Z" fill="#e82020"/>
<text x="892" y="35" font-size="8.6" font-weight="bold" fill="#3a3a3a" font-family="Liberation Sans, sans-serif">Z</text>
<text x="899.5" y="43" font-size="8.6" font-weight="bold" fill="#3a3a3a" font-family="Liberation Sans, sans-serif">X</text>
<path d="M931.8 48.0 L931.8 32.7" stroke="#2828e0" stroke-width="2.0"/><path d="M931.8 28.2 L934.6 32.7 L929.0 32.7 Z" fill="#2828e0"/>
<path d="M931.8 48.0 L916.3 48.0" stroke="#e82020" stroke-width="2.0"/><path d="M911.8 48.0 L916.3 45.2 L916.3 50.8 Z" fill="#e82020"/>
<text x="920.5" y="35" font-size="8.6" font-weight="bold" fill="#3a3a3a" font-family="Liberation Sans, sans-serif">Z</text>
<text x="911.5" y="43" font-size="8.6" font-weight="bold" fill="#3a3a3a" font-family="Liberation Sans, sans-serif">X</text>
<path d="M942.8 48.0 L942.8 32.7" stroke="#2828e0" stroke-width="2.0"/><path d="M942.8 28.2 L945.6 32.7 L940.0 32.7 Z" fill="#2828e0"/>
<path d="M942.8 48.0 L957.3 48.0" stroke="#10b010" stroke-width="2.0"/><path d="M961.8 48.0 L957.3 50.8 L957.3 45.2 Z" fill="#10b010"/>
<text x="948" y="35" font-size="8.6" font-weight="bold" fill="#3a3a3a" font-family="Liberation Sans, sans-serif">Z</text>
<text x="956" y="43" font-size="8.6" font-weight="bold" fill="#3a3a3a" font-family="Liberation Sans, sans-serif">Y</text>
<path d="M987.6 48.0 L987.6 32.7" stroke="#2828e0" stroke-width="2.0"/><path d="M987.6 28.2 L990.4 32.7 L984.8 32.7 Z" fill="#2828e0"/>
<path d="M987.6 48.0 L972.5 48.0" stroke="#10b010" stroke-width="2.0"/><path d="M968.0 48.0 L972.5 45.2 L972.5 50.8 Z" fill="#10b010"/>
<text x="976.5" y="35" font-size="8.6" font-weight="bold" fill="#3a3a3a" font-family="Liberation Sans, sans-serif">Z</text>
<text x="967.5" y="43" font-size="8.6" font-weight="bold" fill="#3a3a3a" font-family="Liberation Sans, sans-serif">Y</text>
<path d="M1007.3 49.5 L999.9 45.1" stroke="#10b010" stroke-width="2.0"/><path d="M996.5 43.0 L1001.2 42.9 L998.6 47.2 Z" fill="#10b010"/>
<path d="M1007.3 49.5 L1014.6 45.1" stroke="#e82020" stroke-width="2.0"/><path d="M1018.0 43.0 L1015.9 47.2 L1013.3 42.9 Z" fill="#e82020"/>
<path d="M1007.3 49.5 L1007.3 40.0" stroke="#2828e0" stroke-width="2.0"/><path d="M1007.3 36.0 L1009.8 40.0 L1004.8 40.0 Z" fill="#2828e0"/>
<text x="995.5" y="39.5" font-size="8" font-weight="bold" fill="#3a3a3a" font-family="Liberation Sans, sans-serif">Y</text>
<text x="1004.3" y="34.5" font-size="8" font-weight="bold" fill="#3a3a3a" font-family="Liberation Sans, sans-serif">Z</text>
<text x="1012.5" y="39.5" font-size="8" font-weight="bold" fill="#3a3a3a" font-family="Liberation Sans, sans-serif">X</text>
<path d="M1025.5 29.5 L1039.5 32 V44 L1025.5 46.5 Z" fill="url(#gblue)" stroke="#2a4a90" stroke-width="0.8"/><path d="M1027 31.5 L1038 33.2 V38 L1027 37.5Z" fill="#b4d4fa" opacity="0.7"/>
<path d="M1044.5 41.5 C1044.5 46 1041 48 1037.5 47.2" fill="none" stroke="#e81818" stroke-width="2.8"/><path d="M1034 46.2 L1039.5 43.2 L1039 50 Z" fill="#e81818"/>
<rect x="1052.8" y="28.5" width="18.2" height="13.5" fill="#3a8ee0" stroke="#1e4e98" stroke-width="1"/><path d="M1053.5 29.2 h16.8 v5 h-16.8z" fill="#7ab8f4" opacity="0.7"/>
<path d="M1054 50 C1054 44 1057.5 42.5 1061.5 42.5 C1065.5 42.5 1069 44 1069 50 Z" fill="#1ea038"/><path d="M1059.5 42.5 L1061.5 46 L1063.5 42.5Z" fill="#fff"/><circle cx="1061.5" cy="37.5" r="4.2" fill="#e8b890"/><path d="M1057.2 36.5 C1057.2 31.5 1065.8 31.5 1065.8 36.5 C1063.5 34.2 1059.5 34.2 1057.2 36.5Z" fill="#6a3c18"/>
<text x="1067.5" y="50.5" font-size="8" font-weight="bold" fill="#222" font-family="Liberation Sans, sans-serif">1</text>
<path d="M1078.5 39.5 H1084.5 L1081.5 43.0 Z" fill="#000"/>
<rect x="1094" y="29" width="2" height="2" fill="#1a1a1a"/><rect x="1094" y="35" width="2" height="2" fill="#1a1a1a"/><rect x="1094" y="41" width="2" height="2" fill="#1a1a1a"/><rect x="1094" y="47" width="2" height="2" fill="#1a1a1a"/>
<path d="M1119.3000000000002 42.3 L1125.3000000000002 48.8" stroke="#8c90c4" stroke-width="3.2" stroke-linecap="round"/><circle cx="1114.4" cy="37.4" r="7" fill="url(#gmag)" stroke="#9a9aa8" stroke-width="1.8"/><circle cx="1114.4" cy="37.4" r="5.4" fill="none" stroke="#d8d8e8" stroke-width="0.8"/>
<path d="M1103.5 47 h5 M1106 44.5 v5" stroke="#111" stroke-width="1.4"/><path d="M1119 29.6 h5" stroke="#111" stroke-width="1.4"/>
<circle cx="1141.5" cy="39" r="10.8" fill="none" stroke="#222" stroke-width="1" stroke-dasharray="1 1.6"/>
<path d="M1146.7 42.3 L1152.7 48.8" stroke="#8c90c4" stroke-width="3.2" stroke-linecap="round"/><circle cx="1141.8" cy="37.4" r="7" fill="url(#gmag)" stroke="#9a9aa8" stroke-width="1.8"/><circle cx="1141.8" cy="37.4" r="5.4" fill="none" stroke="#d8d8e8" stroke-width="0.8"/>
<path d="M1170.300 31.500 C1167 36 1167 43 1170 47.500" stroke="#5c5c90" stroke-width="1.700" fill="none"/><path d="M1162.500 40 C1167 38.500 1172 38 1176.500 38.200" stroke="#6a6aa0" stroke-width="1.700" fill="none"/>
<path d="M1170.700 28.600 L1172.300 34 L1167.600 32.800 Z" fill="#50507e"/><path d="M1170.300 50 L1167.300 45.600 L1172.200 45.800 Z" fill="#8a8ec4"/><path d="M1159.600 40.500 L1164.200 37.500 L1164.600 42.300 Z" fill="#50507e"/><path d="M1179 38 L1174.300 35.800 L1174.300 40.600 Z" fill="#9a9ed0"/>
<path d="M1192.5 40 C1191 37.5 1189.5 37 1189.2 38.5 C1189.2 40.5 1192 44.5 1194 47.5 C1195 49.3 1197 50 1200 50 C1204 50 1205.5 48 1205.8 44.5 L1206.8 36.5 C1207 34.5 1204.8 34.3 1204.5 36.2 L1204 39.5 L1203.8 31.5 C1203.8 29.5 1201.4 29.5 1201.3 31.5 L1201.1 38.5 L1200.4 29.8 C1200.3 27.8 1197.8 28 1197.9 30 L1198.2 38.6 L1196.6 31.6 C1196.2 29.8 1194 30.2 1194.3 32.2 L1195.8 42.5 Z" fill="#fff" stroke="#5e5e5e" stroke-width="0.95" stroke-linejoin="round"/>
<path d="M1215 38.500 L1222 33.800 V36.900 H1229.500 V33.800 L1236.800 38.500 L1229.500 43.300 V40.200 H1222 V43.300 Z" fill="url(#gpurh)" stroke="#6468a8" stroke-width="0.400"/>
<path d="M1253.700 28.200 L1259 35.500 H1255.400 V42.500 H1259 L1253.700 49.800 L1248.600 42.500 H1252 V35.500 H1248.600 Z" fill="url(#gpurv)" stroke="#6468a8" stroke-width="0.400"/>
<path d="M1281 28.300 C1272 33.500 1271.500 44.500 1281 49.800 L1280.300 45.500 C1276.800 42.500 1276.800 36 1280.300 32.800 Z" fill="url(#gpurv)" stroke="#54548c" stroke-width="0.500"/><path d="M1281.300 28 L1281 34 L1276.500 31 Z" fill="#a8acec"/><path d="M1281.300 50 L1276.300 47 L1281 44 Z" fill="#3c3c80"/>
<path d="M1284.500 28.300 C1293.500 33.500 1294 44.500 1284.500 49.800 L1285.200 45.500 C1288.700 42.500 1288.700 36 1285.200 32.800 Z" fill="url(#gpurv2)" stroke="#54548c" stroke-width="0.500"/><path d="M1284.200 28 L1284.500 34 L1289 31 Z" fill="#3c3c80"/><path d="M1284.200 50 L1289.200 47 L1284.500 44 Z" fill="#a8acec"/>
<rect x="1303" y="29" width="2" height="2" fill="#1a1a1a"/><rect x="1303" y="35" width="2" height="2" fill="#1a1a1a"/><rect x="1303" y="41" width="2" height="2" fill="#1a1a1a"/><rect x="1303" y="47" width="2" height="2" fill="#1a1a1a"/>
<rect x="1318" y="27.8" width="7" height="3" rx="1" fill="#9a9ac8"/><rect x="1315" y="29.1" width="19" height="11" rx="2.2" fill="url(#gcam)" stroke="#8686b4" stroke-width="0.5"/><rect x="1318.2" y="31.0" width="3.2" height="1.4" fill="#eeeefa"/><circle cx="1328" cy="35.3" r="4.2" fill="#6a6aa4"/><circle cx="1328" cy="35.3" r="2.6" fill="#b9aef6"/>
<rect x="1312" y="38" width="11.5" height="11.5" rx="1.5" fill="url(#gflop)" stroke="#34346e" stroke-width="0.8"/><rect x="1313.9714285714285" y="39" width="7.557142857142857" height="4.928571428571429" fill="#e6e6fb"/><path d="M1314.9571428571428 40.3 h5.585714285714285 M1314.9571428571428 41.94285714285714 h5.585714285714285" stroke="#9a9ad0" stroke-width="0.8"/><rect x="1314.9571428571428" y="44.9" width="5.914285714285715" height="4.6" fill="#c4c4e0"/><rect x="1315.942857142857" y="45.885714285714286" width="1.6428571428571428" height="2.9571428571428573" fill="#34346e"/>
<rect x="1346" y="27.8" width="7" height="3" rx="1" fill="#9a9ac8"/><rect x="1343" y="29.1" width="19" height="11" rx="2.2" fill="url(#gcam)" stroke="#8686b4" stroke-width="0.5"/><rect x="1346.2" y="31.0" width="3.2" height="1.4" fill="#eeeefa"/><circle cx="1356" cy="35.3" r="4.2" fill="#6a6aa4"/><circle cx="1356" cy="35.3" r="2.6" fill="#b9aef6"/>
<rect x="1340.5" y="38.5" width="15" height="11" fill="#d8dee9" stroke="#111" stroke-width="1"/>
<rect x="1374" y="27.8" width="7" height="3" rx="1" fill="#9a9ac8"/><rect x="1371" y="29.1" width="19" height="11" rx="2.2" fill="url(#gcam)" stroke="#8686b4" stroke-width="0.5"/><rect x="1374.2" y="31.0" width="3.2" height="1.4" fill="#eeeefa"/><circle cx="1384" cy="35.3" r="4.2" fill="#6a6aa4"/><circle cx="1384" cy="35.3" r="2.6" fill="#b9aef6"/>
<rect x="1368.5" y="43.5" width="14" height="6" fill="#d4d4d4" stroke="#222" stroke-width="1"/><path d="M1371 45.5 h7 M1371 47.5 h7" stroke="#fff" stroke-width="0.9"/>
<rect x="1402.3" y="27.8" width="7" height="3" rx="1" fill="#9a9ac8"/><rect x="1399.3" y="29.1" width="19" height="11" rx="2.2" fill="url(#gcam)" stroke="#8686b4" stroke-width="0.5"/><rect x="1402.5" y="31.0" width="3.2" height="1.4" fill="#eeeefa"/><circle cx="1412.3" cy="35.3" r="4.2" fill="#6a6aa4"/><circle cx="1412.3" cy="35.3" r="2.6" fill="#b9aef6"/>
<rect x="1396.5" y="38.5" width="15" height="11" fill="none" stroke="#111" stroke-width="1.1" stroke-dasharray="2 1.5"/>
<rect x="1430.4" y="27.8" width="7" height="3" rx="1" fill="#9a9ac8"/><rect x="1427.4" y="29.1" width="19" height="11" rx="2.2" fill="url(#gcam)" stroke="#8686b4" stroke-width="0.5"/><rect x="1430.6000000000001" y="31.0" width="3.2" height="1.4" fill="#eeeefa"/><circle cx="1440.4" cy="35.3" r="4.2" fill="#6a6aa4"/><circle cx="1440.4" cy="35.3" r="2.6" fill="#b9aef6"/>
<rect x="1424.5" y="38.5" width="15" height="11" fill="#d8dee9" stroke="#111" stroke-width="1"/>
<rect x="1427.500" y="40.500" width="9" height="6" fill="#8090d0" stroke="#111" stroke-width="1"/>
<rect x="1455.5" y="27.6" width="8" height="3.5" fill="#c8c8e4" stroke="#7a7aae" stroke-width="0.6"/><rect x="1452" y="31.1" width="15.5" height="9.5" rx="1" fill="url(#gcam)" stroke="#7a7aae" stroke-width="0.6"/><rect x="1457" y="33.6" width="6" height="2.6" fill="#d4d4ee" stroke="#7a7aae" stroke-width="0.5"/><path d="M1467.5 34.1 L1473.5 31.1 V40.1 L1467.5 37.6 Z" fill="url(#gcam)" stroke="#7a7aae" stroke-width="0.6"/>
<rect x="1452.5" y="38.5" width="15" height="11" fill="#d8dee9" stroke="#111" stroke-width="1"/>
<rect x="1483.8" y="27.6" width="8" height="3.5" fill="#c8c8e4" stroke="#7a7aae" stroke-width="0.6"/><rect x="1480.3" y="31.1" width="15.5" height="9.5" rx="1" fill="url(#gcam)" stroke="#7a7aae" stroke-width="0.6"/><rect x="1485.3" y="33.6" width="6" height="2.6" fill="#d4d4ee" stroke="#7a7aae" stroke-width="0.5"/><path d="M1495.8 34.1 L1501.8 31.1 V40.1 L1495.8 37.6 Z" fill="url(#gcam)" stroke="#7a7aae" stroke-width="0.6"/>
<rect x="1480.5" y="38.5" width="15" height="11" fill="none" stroke="#111" stroke-width="1.1" stroke-dasharray="2 1.5"/>
<path d="M1785 38 L1794.5 29.5 V34 H1806.8 V42 H1794.5 V46.5 Z" fill="#c9e3ed" stroke="#d6ebf2" stroke-width="0.6"/>
<path d="M1835 38 L1825.500 29.5 V34 H1813.2 V42 H1825.500 V46.5 Z" fill="#c9e3ed" stroke="#d6ebf2" stroke-width="0.6"/>
<rect x="1838.5" y="29.5" width="35" height="19.5" fill="#fff" stroke="#7a7a7a" stroke-width="1"/>
<text x="1871" y="43" font-size="12.3" text-anchor="end" fill="#000" font-family="Liberation Sans, sans-serif">1</text><text x="1875.5" y="43" font-size="11.5" fill="#000" font-family="Liberation Sans, sans-serif">of 1</text><rect x="438" y="79" width="2" height="2" fill="#1a1a1a"/><rect x="444" y="79" width="2" height="2" fill="#1a1a1a"/><rect x="450" y="79" width="2" height="2" fill="#1a1a1a"/><rect x="456" y="79" width="2" height="2" fill="#1a1a1a"/>
<circle cx="448.9" cy="94.9" r="6.9" fill="url(#gysph)"/>
<text x="439.8" y="110" font-size="8.4" font-weight="bold" fill="#000" font-family="Liberation Sans, sans-serif" textLength="18.4" lengthAdjust="spacingAndGlyphs">XYZ</text>
<path d="M438.6 136.8 L458.6 117.4" stroke="#f00000" stroke-width="2.2"/><path d="M451 117 H459.4 V125" stroke="#f00000" stroke-width="2.4" fill="none"/>
<circle cx="440.8" cy="134.8" r="2.1" fill="#eeee00" stroke="#b8b800" stroke-width="0.35"/><circle cx="445.8" cy="129.9" r="2.1" fill="#eeee00" stroke="#b8b800" stroke-width="0.35"/><circle cx="448.9" cy="126.8" r="2.1" fill="#eeee00" stroke="#b8b800" stroke-width="0.35"/>
<path d="M438.6 165 L459.3 144.8" stroke="#f00000" stroke-width="2.2"/>
<circle cx="440.7" cy="163" r="2.1" fill="#eeee00" stroke="#b8b800" stroke-width="0.35"/><circle cx="445.4" cy="157.9" r="2.1" fill="#eeee00" stroke="#b8b800" stroke-width="0.35"/><circle cx="448.9" cy="154.7" r="2.1" fill="#eeee00" stroke="#b8b800" stroke-width="0.35"/><circle cx="457.2" cy="146.6" r="2.1" fill="#eeee00" stroke="#b8b800" stroke-width="0.35"/>
<path d="M439.5 192 C443 184 450 177 458.5 173.7" stroke="#f00000" stroke-width="3" fill="none" stroke-linecap="round"/><circle cx="455.7" cy="190" r="1.9" fill="#eeee00" stroke="#b8b800" stroke-width="0.35"/>
<path d="M439.9 202 L448.6 204 L442 216 C444 221 452 221.500 454 217.7 L457.8 202" stroke="#1010e8" stroke-width="2.6" fill="none" stroke-linejoin="round"/>
<circle cx="439.9" cy="202" r="1.9" fill="#e01010" stroke="#900" stroke-width="0.4"/><circle cx="448.6" cy="204" r="1.9" fill="#e01010" stroke="#900" stroke-width="0.4"/><circle cx="457.8" cy="202" r="1.9" fill="#e01010" stroke="#900" stroke-width="0.4"/><circle cx="442" cy="216.1" r="1.9" fill="#e01010" stroke="#900" stroke-width="0.4"/><circle cx="454" cy="217.7" r="1.9" fill="#e01010" stroke="#900" stroke-width="0.4"/>
<rect x="438" y="232" width="2" height="2" fill="#1a1a1a"/><rect x="444" y="232" width="2" height="2" fill="#1a1a1a"/><rect x="450" y="232" width="2" height="2" fill="#1a1a1a"/><rect x="456" y="232" width="2" height="2" fill="#1a1a1a"/>
<path d="M444.8 246 C441 249 439.5 254 440 259" stroke="#8088b8" stroke-width="1.8" fill="none"/>
<path d="M456.9 257.6 L449.3 250.4" stroke="#000" stroke-width="1.1"/><path d="M446.8 248.0 L450.9 248.8 L447.8 252.0 Z" fill="#000"/>
<path d="M456.9 257.8 L446.5 258.2" stroke="#000" stroke-width="1.1"/><path d="M443.0 258.3 L446.4 256.0 L446.6 260.4 Z" fill="#000"/>
<path d="M452 253 C451 254.500 451 256.500 451.800 258" stroke="#000" stroke-width="0.7" fill="none"/>
<circle cx="444.8" cy="245.9" r="2" fill="#eeee00" stroke="#b8b800" stroke-width="0.35"/><circle cx="439.9" cy="258.9" r="2" fill="#eeee00" stroke="#b8b800" stroke-width="0.35"/><circle cx="456.9" cy="257.6" r="2" fill="#eeee00" stroke="#b8b800" stroke-width="0.35"/>
<path d="M438 271.5 L448 269.500 V278.2 L438 280 Z" fill="#8686c8" stroke="#3a3a78" stroke-width="0.7"/><path d="M443 270.500 V279 M438 275.700 L448 273.8" stroke="#3a3a78" stroke-width="0.8"/>
<path d="M438 283 v6.5 a3 1.3 0 0 0 6 0 v-6.5z" fill="#28c828" stroke="#0a8a0a" stroke-width="0.5"/><ellipse cx="441" cy="283" rx="3" ry="1.3" fill="#70f070" stroke="#0a8a0a" stroke-width="0.5"/>
<path d="M448.300 282.800 L452.300 288.600" stroke="#1c2664" stroke-width="4.400" stroke-linecap="round"/><path d="M453.600 280.300 L457.600 286.100" stroke="#1c2664" stroke-width="4.400" stroke-linecap="round"/><circle cx="452.600" cy="288.900" r="1.700" fill="#5a90f4"/><circle cx="457.900" cy="286.400" r="1.700" fill="#5a90f4"/><path d="M447.300 281.800 l1.800 2.600 M452.600 279.300 l1.800 2.600" stroke="#7a88d0" stroke-width="1.300" stroke-linecap="round"/><path d="M450.500 283 l3 -1.500" stroke="#1c2664" stroke-width="2"/>
<path d="M438 299.800 C442 299.500 447 298.500 451.500 297 V310.500 C447 311.500 442 312 438 312.800 Z" fill="url(#grain)" stroke="#223" stroke-width="0.6"/>
<path d="M452.400 307.500 V314.300 L444.800 318.300 M452.400 314.300 L459.500 318.300" stroke="#8088b8" stroke-width="2" fill="none" stroke-linecap="round"/>
<rect x="438.300" y="326.500" width="15.400" height="14" rx="1" fill="#fafafa" stroke="#8a8a8a" stroke-width="0.8"/><path d="M438.700 327 h14.600 v3.800 h-14.600z" fill="#9a9a9a"/><rect x="441" y="333" width="3" height="5" fill="none" stroke="#c8c8c8" stroke-width="0.800"/><rect x="445" y="333" width="3" height="5" fill="none" stroke="#c8c8c8" stroke-width="0.800"/>
<path d="M453.5 331.0 L454.5 334.5 L458.1 333.7 L456.6 337.1 L459.8 338.8 L456.5 340.4 L457.8 343.8 L454.3 342.8 L453.2 346.3 L451.0 343.3 L447.9 345.3 L448.2 341.6 L444.6 341.1 L447.2 338.5 L444.7 335.7 L448.4 335.4 L448.3 331.7 L451.3 333.9 Z" fill="#f4ec10" stroke="#b0a800" stroke-width="0.500"/>
<circle cx="450.200" cy="336.900" r="2.500" fill="#18c018" stroke="#0a800a" stroke-width="0.500"/><circle cx="453.700" cy="340.800" r="2.500" fill="#18c018" stroke="#0a800a" stroke-width="0.500"/>
<path d="M443.8 330.5 L445.7 332.4" stroke="#000" stroke-width="0.9"/><path d="M447.3 334.0 L444.6 333.6 L446.9 331.3 Z" fill="#000"/>
<path d="M460.0 347.0 L458.1 345.1" stroke="#000" stroke-width="0.9"/><path d="M456.5 343.5 L459.2 343.9 L456.9 346.2 Z" fill="#000"/>
<rect x="438" y="357" width="2" height="2" fill="#1a1a1a"/><rect x="444" y="357" width="2" height="2" fill="#1a1a1a"/><rect x="450" y="357" width="2" height="2" fill="#1a1a1a"/><rect x="456" y="357" width="2" height="2" fill="#1a1a1a"/>
<rect x="438.200" y="369.200" width="6.800" height="17.300" rx="2.200" fill="#8e8e8e" stroke="#5a5a5a" stroke-width="0.600"/><path d="M439.500 372 l2 1.500 l2 -1.500 M439.500 375.500 l2 1.500 l2 -1.500 M439.500 379 l2 1.500 l2 -1.500 M439.500 382.500 l2 1.500 l2 -1.500" stroke="#5a5a5a" stroke-width="0.800" fill="none"/>
<path d="M446.200 378.200 H449" stroke="#f01010" stroke-width="1.800"/><path d="M449 378.200 C451 378 450.500 374 452 372.500" stroke="#f0d000" stroke-width="1.800" fill="none"/><path d="M452 372.500 C453 371 454.500 370.500 456 370.300" stroke="#20d060" stroke-width="1.800" fill="none"/><path d="M456 370.300 H460" stroke="#1030e0" stroke-width="1.800"/>
<path d="M441.500 396 L456.500 399.500" stroke="#e82010" stroke-width="2.400"/><path d="M456.500 399.500 L441.500 401.500 L456.500 404.500" stroke="#e8c010" stroke-width="2.400" fill="none"/><path d="M456.500 404.500 L441.500 406.500 L456.500 409.500" stroke="#20b820" stroke-width="2.400" fill="none"/><path d="M456.500 409.500 L441.500 411.500 L456.500 414.500" stroke="#1890e8" stroke-width="2.400" fill="none"/>
<path d="M443.700 437.600 L455.700 426.300" stroke="#40d0a0" stroke-width="11" stroke-linecap="round"/><path d="M443.700 437.600 L455.700 426.300" stroke="#f0f0f0" stroke-width="7.600" stroke-linecap="round"/><circle cx="443.700" cy="437.600" r="6.300" fill="#40d0a0"/>
<circle cx="443.700" cy="437.600" r="4.800" fill="#b87818" stroke="#7a4a08" stroke-width="0.500"/><circle cx="455.700" cy="426.300" r="3.400" fill="#4a88c8" stroke="#285898" stroke-width="0.500"/><circle cx="452.400" cy="433.200" r="2.300" fill="#7048b8"/>
<rect x="438" y="454" width="2" height="2" fill="#1a1a1a"/><rect x="444" y="454" width="2" height="2" fill="#1a1a1a"/><rect x="450" y="454" width="2" height="2" fill="#1a1a1a"/><rect x="456" y="454" width="2" height="2" fill="#1a1a1a"/>
<path d="M447.400 468.300 H460 V472.300 H451.800 V474.800 H458 V478.300 H451.800 V480.800 H460 V484.800 H447.400 Z" fill="#4e4e54"/>
<rect x="443" y="463" width="4.200" height="4.200" fill="#90c010"/><rect x="440" y="468" width="2.800" height="1.800" fill="#a8d030"/><rect x="438.300" y="471" width="1.200" height="1.500" fill="#b8d860"/><rect x="443.500" y="472.300" width="1.800" height="1.500" fill="#a8d030"/><rect x="438" y="794" width="2" height="2" fill="#1a1a1a"/><rect x="438" y="800" width="2" height="2" fill="#1a1a1a"/><rect x="438" y="806" width="2" height="2" fill="#1a1a1a"/><rect x="438" y="812" width="2" height="2" fill="#1a1a1a"/>
<circle cx="457.8" cy="804" r="10.3" fill="#ffff00"/><path d="M457.8 804 L447.5 804 A10.3 10.3 0 0 1 457.8 793.7 Z M457.8 804 L468.1 804 A10.3 10.3 0 0 1 457.8 814.3 Z" fill="#000"/>
<circle cx="457.800" cy="804" r="10.300" fill="none" stroke="#4a4a4a" stroke-width="1"/>
<path d="M473.4 804 H479.4 L476.4 807.5 Z" fill="#000"/>
<rect x="489" y="794" width="2" height="2" fill="#1a1a1a"/><rect x="489" y="800" width="2" height="2" fill="#1a1a1a"/><rect x="489" y="806" width="2" height="2" fill="#1a1a1a"/><rect x="489" y="812" width="2" height="2" fill="#1a1a1a"/>
<circle cx="536.900" cy="804.400" r="10.800" fill="url(#grun)" stroke="#2a8a18" stroke-width="0.800"/>
<text x="536.900" y="807.600" font-size="7.600" font-weight="bold" text-anchor="middle" fill="#1c6410" font-family="Liberation Sans, sans-serif" textLength="17" lengthAdjust="spacingAndGlyphs">RUN</text>
<rect x="551.500" y="791.500" width="27" height="27" fill="#f6f6f6"/><rect x="552" y="791" width="26.500" height="1" fill="#000"/><rect x="552" y="791" width="1" height="27.500" fill="#000"/><rect x="553" y="817.500" width="26" height="1" fill="#fff"/><rect x="578" y="792" width="1" height="26" fill="#fff"/>
<path d="M560.500 796.500 V812 L564 808.800 L567 815.200 L569.500 814 L566.600 807.800 H571.300 Z" fill="#fff" stroke="#000" stroke-width="1" stroke-linejoin="round"/>
<rect x="586" y="794" width="2" height="2" fill="#1a1a1a"/><rect x="586" y="800" width="2" height="2" fill="#1a1a1a"/><rect x="586" y="806" width="2" height="2" fill="#1a1a1a"/><rect x="586" y="812" width="2" height="2" fill="#1a1a1a"/>
<path d="M596.800 806 L600 803.200 L604.500 807.800 L613.500 797.500 L616.500 800 L604.800 813.800 Z" fill="#a9c24e" stroke="#7d9632" stroke-width="1" stroke-linejoin="round"/>
<rect x="627" y="794" width="2" height="2" fill="#1a1a1a"/><rect x="627" y="800" width="2" height="2" fill="#1a1a1a"/><rect x="627" y="806" width="2" height="2" fill="#1a1a1a"/><rect x="627" y="812" width="2" height="2" fill="#1a1a1a"/>
<path d="M636.7 797.1 h8 l1.2 2.5 h11.3 v14.5 h-20.5 z" fill="url(#gcyanf)" stroke="#1a7888" stroke-width="1"/><path d="M637.7 798.0 h6.3 l0.8 1.600 h-7.100z" fill="#d0f6fa"/><path d="M637.4000000000001 800.6 h19.1" stroke="#c0f4f8" stroke-width="0.900"/>
<circle cx="642.3" cy="809.8" r="3.6" fill="#ffff00"/><path d="M642.3 809.8 L638.6999999999999 809.8 A3.6 3.6 0 0 1 642.3 806.1999999999999 Z M642.3 809.8 L645.9 809.8 A3.6 3.6 0 0 1 642.3 813.4 Z" fill="#000"/><circle cx="642.3" cy="809.8" r="3.6" fill="none" stroke="#222" stroke-width="0.9"/>
<ellipse cx="651" cy="802" rx="2.800" ry="2" fill="#28c838"/><ellipse cx="647.300" cy="805.500" rx="2.800" ry="2" fill="#2838e0"/><ellipse cx="653.800" cy="806" rx="2.800" ry="2" fill="#e08818"/>
<path d="M664.5 797.1 h8 l1.2 2.5 h11.3 v14.5 h-20.5 z" fill="url(#gcyanf)" stroke="#1a7888" stroke-width="1"/><path d="M665.5 798.0 h6.3 l0.8 1.600 h-7.100z" fill="#d0f6fa"/><path d="M665.2 800.6 h19.1" stroke="#c0f4f8" stroke-width="0.900"/>
<path d="M675 802.500 L679.800 812 H670.200 Z" fill="#f8c000" stroke="#c88a00" stroke-width="0.900"/>
<path d="M692.5 797.1 h8 l1.2 2.5 h11.3 v14.5 h-20.5 z" fill="url(#gcyanf)" stroke="#1a7888" stroke-width="1"/><path d="M693.5 798.0 h6.3 l0.8 1.600 h-7.100z" fill="#d0f6fa"/><path d="M693.2 800.6 h19.1" stroke="#c0f4f8" stroke-width="0.900"/>
<text x="702.800" y="812.500" font-size="11.500" font-weight="bold" text-anchor="middle" fill="#3a3a3a" font-family="Liberation Sans, sans-serif" textLength="17" lengthAdjust="spacingAndGlyphs">CS</text>
<rect x="724" y="794" width="2" height="2" fill="#1a1a1a"/><rect x="724" y="800" width="2" height="2" fill="#1a1a1a"/><rect x="724" y="806" width="2" height="2" fill="#1a1a1a"/><rect x="724" y="812" width="2" height="2" fill="#1a1a1a"/>
<circle cx="743.800" cy="804.900" r="7" fill="url(#gysph)" stroke="#4a4a00" stroke-width="0.600"/>
<circle cx="772" cy="804.6" r="8.3" fill="#ffff00"/><path d="M772 804.6 L763.7 804.6 A8.3 8.3 0 0 1 772 796.3000000000001 Z M772 804.6 L780.3 804.6 A8.3 8.3 0 0 1 772 812.9 Z" fill="#000"/><circle cx="772" cy="804.6" r="8.3" fill="none" stroke="#222" stroke-width="0.9"/>
<circle cx="772" cy="804.600" r="8.300" fill="none" stroke="#666" stroke-width="1.300"/>
<path d="M792.8 814.5 L803.1 804.5 L805.7 807.2 L809.6 795.4 L797.7 798.8 L800.2 801.5 L789.8 811.5 Z" fill="#f0e000" stroke="#6a6000" stroke-width="0.900" stroke-linejoin="round"/>
<path d="M829.2 806.8 L829.2 801.0 L830.6 801.0 L828.0 797.0 L825.4 801.0 L826.8 801.0 L826.8 806.8 Z" fill="#ece400" stroke="#a09800" stroke-width="0.600"/>
<path d="M827.4 805.7 L820.7 809.4 L820.1 808.2 L817.8 812.4 L822.6 812.8 L821.9 811.5 L828.6 807.9 Z" fill="#ece400" stroke="#a09800" stroke-width="0.600"/>
<path d="M827.4 807.9 L834.1 811.5 L833.4 812.8 L838.2 812.4 L835.9 808.2 L835.3 809.4 L828.6 805.7 Z" fill="#ece400" stroke="#a09800" stroke-width="0.600"/>
<path d="M855.500 796 V815 M846 805.300 H865" stroke="#111" stroke-width="1.100"/><path d="M846 811.500 C854 811.500 853 799 866 798.500" stroke="#f01818" stroke-width="1.300" fill="none"/>
<path d="M879 794 H895 V808 H879 Z" fill="#a4eaa4"/><path d="M873 802 L879 794 V808 L873 816 Z" fill="#a4ace8"/><path d="M873 816 L879 808 H895 L889 816 Z" fill="#f0a4a4"/><path d="M879 794 V808 H895" stroke="#30c030" stroke-width="0.800" fill="none"/><path d="M873 816 L879 808" stroke="#3030c0" stroke-width="0.800"/>
<path d="M874 802.500 C879 799 884 803.500 893.500 801.500 L890.500 806.500 C883 808 879 804 874 802.500 Z" fill="#5c68a8" stroke="#30386a" stroke-width="0.500"/>
<path d="M908 794.300 L914 796.500 V803 L908 805.500 L902.300 803 V796.500 Z" fill="#18b818"/><path d="M908 794.300 L914 796.500 L908 798.800 L902.300 796.500 Z" fill="#68e868"/><path d="M908 798.800 V805.500 L914 803 V796.500Z" fill="#0a8a0a"/>
<path d="M916.500 798.500 L922.800 809.500 C921 813 913.500 813 912 809.500 Z" fill="#d81818"/><path d="M916.500 798.500 L912 809.500 C912.500 811 914 812 916 812.200 Z" fill="#f06060"/>
<path d="M904 803.500 L912.500 807 A3 4.200 22 0 1 910 814.500 L902 811 Z" fill="#3848c8"/><ellipse cx="903.400" cy="807.200" rx="2.600" ry="4" transform="rotate(22 903.400 807.200)" fill="#8898f0" stroke="#2838a8" stroke-width="0.500"/><path d="M904 803.500 L912.500 807 A3 4.200 22 0 1 910 814.500" fill="none" stroke="#2030a0" stroke-width="0.500"/>
<path d="M930.800 801 C936 801.500 943 799 947.500 795.800 V808.500 C943 812 936 813 930.800 813.800 Z" fill="url(#gblue)" stroke="#2a4a98" stroke-width="0.900"/>
<path d="M967.400 796 V815 M958 805.300 H977" stroke="#111" stroke-width="1.100"/>
<path d="M958 811.5 L962 811" stroke="#f000f0" stroke-width="1.400" stroke-linecap="round"/>
<path d="M962 811 L965.5 808" stroke="#2020f0" stroke-width="1.400" stroke-linecap="round"/>
<path d="M965.5 808 L967.5 805" stroke="#00c8c8" stroke-width="1.400" stroke-linecap="round"/>
<path d="M967.5 805 L969.5 802" stroke="#20d020" stroke-width="1.400" stroke-linecap="round"/>
<path d="M969.5 802 L972.5 799.3" stroke="#e8e800" stroke-width="1.400" stroke-linecap="round"/>
<path d="M972.5 799.3 L977.5 798.8" stroke="#f02020" stroke-width="1.400" stroke-linecap="round"/>
<path d="M987.800 800.500 C993 799.800 999 798.500 1004.300 795.800 V808.500 C999 811 993 812.300 987.800 813 Z" fill="url(#grain)" stroke="#223" stroke-width="0.600"/>
<rect x="1017" y="794" width="2" height="2" fill="#1a1a1a"/><rect x="1017" y="800" width="2" height="2" fill="#1a1a1a"/><rect x="1017" y="806" width="2" height="2" fill="#1a1a1a"/><rect x="1017" y="812" width="2" height="2" fill="#1a1a1a"/>
<path d="M1034.500 802 L1041 797.800 L1047.500 799.800 V808.500 L1040 810.500 Z" fill="#b8b8b8" stroke="#6a6a6a" stroke-width="0.700"/><path d="M1041 797.800 L1047.500 799.800 L1043 803 L1036.500 801.200Z" fill="#e4e4e4"/>
<path d="M1027.800 806.500 L1037 802 L1040.500 808.500 L1031 812.800 Z" fill="url(#ggray)" stroke="#6a6a6a" stroke-width="0.600"/><ellipse cx="1029.400" cy="809.600" rx="2.200" ry="3.400" transform="rotate(-25 1029.400 809.600)" fill="#d8d8d8" stroke="#6a6a6a" stroke-width="0.700"/>
<path d="M1054.200 794.500 H1065 M1054.200 815.500 H1065 M1059.500 796 V814" stroke="#222" stroke-width="1"/><path d="M1059.500 795.200 l-2.500 4.300 h5z M1059.500 814.800 l-2.500 -4.300 h5z" fill="#707070"/>
<path d="M1062 806.500 C1063 799.500 1067 799.500 1068.500 804 C1070 809.500 1073 808 1076 804.500" stroke="#f01818" stroke-width="1.400" fill="none"/>
<rect x="1090.500" y="794.300" width="5" height="10" rx="1.500" fill="#fff" stroke="#111" stroke-width="1.100"/><rect x="1095" y="796" width="8.500" height="3.400" rx="1.500" fill="#fff" stroke="#111" stroke-width="1.100"/><path d="M1090.500 796.500 h5 M1090.500 798.500 h5 M1090.500 800.500 h5 M1090.500 802.500 h5" stroke="#111" stroke-width="0.800"/>
<rect x="1090.500" y="803.800" width="5" height="11.800" rx="1.500" fill="#fff" stroke="#111" stroke-width="1.100"/><rect x="1082.300" y="807.500" width="8.500" height="3.400" rx="1.500" fill="#fff" stroke="#111" stroke-width="1.100"/><path d="M1090.500 806 h5 M1090.500 808 h5 M1090.500 810 h5 M1090.500 812 h5 M1090.500 814 h5" stroke="#111" stroke-width="0.800"/>
<rect x="1118.4" y="795" width="4" height="20" rx="1" fill="#bcbcbc" stroke="#a8a8a8" stroke-width="0.400" transform="rotate(0 1120.4 805)"/>
<rect x="1118.4" y="795" width="4" height="20" rx="1" fill="#bcbcbc" stroke="#a8a8a8" stroke-width="0.400" transform="rotate(30 1120.4 805)"/>
<rect x="1118.4" y="795" width="4" height="20" rx="1" fill="#bcbcbc" stroke="#a8a8a8" stroke-width="0.400" transform="rotate(60 1120.4 805)"/>
<rect x="1118.4" y="795" width="4" height="20" rx="1" fill="#bcbcbc" stroke="#a8a8a8" stroke-width="0.400" transform="rotate(90 1120.4 805)"/>
<rect x="1118.4" y="795" width="4" height="20" rx="1" fill="#bcbcbc" stroke="#a8a8a8" stroke-width="0.400" transform="rotate(120 1120.4 805)"/>
<rect x="1118.4" y="795" width="4" height="20" rx="1" fill="#bcbcbc" stroke="#a8a8a8" stroke-width="0.400" transform="rotate(150 1120.4 805)"/>
<circle cx="1120.4" cy="805" r="7.800" fill="url(#ggear)"/><circle cx="1120.4" cy="805" r="7.800" fill="none" stroke="#b0b0b0" stroke-width="0.800"/><circle cx="1120.4" cy="805" r="2.500" fill="#9c9c9c"/><circle cx="1121.0" cy="805" r="1.300" fill="#f4f4f4"/>
<circle cx="1149.400" cy="806.200" r="9" fill="none" stroke="#222" stroke-width="1.400"/><path d="M1141.500 798.500 C1146 799.500 1151 801.500 1153 804.500 C1155 808 1152 811 1148.500 809.800 C1145 808.500 1143.500 803 1141.500 798.500Z" fill="#5a6494" stroke="#30386a" stroke-width="0.500"/><rect x="1147.200" y="794.300" width="4.600" height="5.800" fill="#b4dc10" stroke="#7a9a08" stroke-width="0.500"/>
<text x="1166.800" y="812.200" font-size="20" fill="#000" stroke="#000" stroke-width="0.450" font-family="Liberation Sans, sans-serif" textLength="20" lengthAdjust="spacingAndGlyphs">f=0</text>
<rect x="1198" y="794" width="2" height="2" fill="#1a1a1a"/><rect x="1198" y="800" width="2" height="2" fill="#1a1a1a"/><rect x="1198" y="806" width="2" height="2" fill="#1a1a1a"/><rect x="1198" y="812" width="2" height="2" fill="#1a1a1a"/>
<path d="M1207.0 804.6 L1220.8 804.6" stroke="#e01010" stroke-width="2.8"/><path d="M1227.3 804.6 L1220.8 808.4 L1220.8 800.8 Z" fill="#e01010"/>
<rect x="1227.600" y="795" width="1.300" height="20" fill="#000"/>
<path d="M1235.800 805.500 C1242 801.500 1251 801.500 1257 805.500 V814.500 C1251 811.500 1242 811.500 1235.800 814.500 Z" fill="url(#grain)" stroke="#556" stroke-width="0.500"/>
<path d="M1236.500 796.500 H1256.500" stroke="#f01010" stroke-width="1"/>
<path d="M1236.5 796.500 V801" stroke="#f01010" stroke-width="1"/><path d="M1236.5 803.300 l-1.800 -3 h3.600z" fill="#f01010"/>
<path d="M1243.2 796.500 V801" stroke="#f01010" stroke-width="1"/><path d="M1243.2 803.300 l-1.800 -3 h3.600z" fill="#f01010"/>
<path d="M1249.8 796.500 V801" stroke="#f01010" stroke-width="1"/><path d="M1249.8 803.300 l-1.800 -3 h3.600z" fill="#f01010"/>
<path d="M1256.5 796.500 V801" stroke="#f01010" stroke-width="1"/><path d="M1256.5 803.300 l-1.800 -3 h3.600z" fill="#f01010"/>
<path d="M1266.7 801.5 L1278.2 796.5 C1283.2 796.8 1286.2 804 1283.7 808.5 L1272.2 813.8 Z" fill="url(#ggray)" stroke="#5a5a5a" stroke-width="0.800"/><ellipse cx="1269.2" cy="807.7" rx="4.800" ry="6.800" transform="rotate(-25 1269.2 807.7)" fill="#d4d4d4" stroke="#5a5a5a" stroke-width="0.800"/><ellipse cx="1269.5" cy="807.7" rx="3" ry="4.800" transform="rotate(-25 1269.5 807.7)" fill="#8e8e8e" stroke="#666" stroke-width="0.600"/>
<path d="M1294.5 801.5 L1306 796.5 C1311 796.8 1314 804 1311.5 808.5 L1300 813.8 Z" fill="#7a9af8" stroke="#3848c0" stroke-width="0.800"/><ellipse cx="1304.5" cy="805" rx="7" ry="6" transform="rotate(-25 1304.5 805)" fill="#30d838"/><ellipse cx="1304.5" cy="805" rx="4.500" ry="3.800" transform="rotate(-25 1304.5 805)" fill="#f0d820"/><ellipse cx="1304.5" cy="805" rx="2.600" ry="2.200" transform="rotate(-25 1304.5 805)" fill="#f04020"/><ellipse cx="1297" cy="807.7" rx="4.800" ry="6.800" transform="rotate(-25 1297 807.7)" fill="#b8c8ff" stroke="#3848c0" stroke-width="0.800"/><ellipse cx="1297.3" cy="807.7" rx="3" ry="4.800" transform="rotate(-25 1297.3 807.7)" fill="#6a82e8" stroke="#3848c0" stroke-width="0.600"/>
<path d="M1320 795 L1331 796.6 L1320 799.0 L1331 800.6 L1320 803.0 L1331 804.6 L1320 807.0 L1331 808.6 L1320 811.0 L1331 812.6 L1320 815.0" stroke="#1c9c3c" stroke-width="2.100" fill="none" stroke-linejoin="round"/><path d="M1320 815.300 H1331" stroke="#1c9c3c" stroke-width="1.700"/>
<rect x="1335.300" y="794.300" width="3.600" height="3" fill="#b0b0b0" stroke="#555" stroke-width="0.500"/><rect x="1334" y="797" width="6.600" height="10.500" rx="2" fill="#f4e430" stroke="#8a7a00" stroke-width="0.700"/><rect x="1335.300" y="807.500" width="4" height="5.500" fill="#f8f0a0" stroke="#8a7a00" stroke-width="0.600"/><rect x="1335.300" y="813" width="3.600" height="2.500" fill="#b0b0b0" stroke="#555" stroke-width="0.500"/>
<path d="M1349 801 L1359 796 L1367 798.5 L1357 803.5 Z" fill="#a4a4d0" stroke="#6c6ca4" stroke-width="0.500"/><path d="M1349 801 L1357 803.5 V805.5 L1349 803 Z" fill="#8484b8"/><path d="M1357 803.5 L1367 798.5 V800.5 L1357 805.5Z" fill="#6c6ca4"/><path d="M1353 804.3 L1362 800 V806.5 L1353 810.8 Z" fill="#8484b8"/><path d="M1349 808.5 L1353 806.5 L1357 810.5 L1367 805.5 V807.5 L1357 813 L1349 810.5 Z" fill="#6c6ca4"/><path d="M1349 808.5 L1353.5 806.5 L1357.5 809 L1357 811 Z" fill="#a4a4d0"/>
<path d="M1377 801 L1387 796 L1395 798.5 L1385 803.5 Z" fill="#50dce8" stroke="#1494a4" stroke-width="0.500"/><path d="M1377 801 L1385 803.5 V805.5 L1377 803 Z" fill="#20b8c8"/><path d="M1385 803.5 L1395 798.5 V800.5 L1385 805.5Z" fill="#1494a4"/><path d="M1381 804.3 L1390 800 V806.5 L1381 810.8 Z" fill="#20b8c8"/><path d="M1377 808.5 L1381 806.5 L1385 810.5 L1395 805.5 V807.5 L1385 813 L1377 810.5 Z" fill="#1494a4"/><path d="M1377 808.5 L1381.5 806.5 L1385.5 809 L1385 811 Z" fill="#50dce8"/><path d="M1384 803 V809.5 M1387 801.5 V808 M1390 800 V806.5" stroke="#0a6a78" stroke-width="0.900"/>
<path d="M1416.1 794.6 L1416.7 800.5 L1422.2 798.4 L1418.9 803.2 L1424.5 805.2 L1418.8 806.8 L1421.9 811.9 L1416.5 809.5 L1415.6 815.3 L1413.0 810.0 L1408.5 813.9 L1409.9 808.1 L1404.0 808.2 L1408.8 804.8 L1404.2 801.1 L1410.1 801.5 L1409.0 795.7 L1413.2 799.8 Z" fill="#f4ec10" stroke="#b0a800" stroke-width="0.500"/>
<circle cx="1411.500" cy="802" r="3" fill="#18c018" stroke="#0a800a" stroke-width="0.500"/><circle cx="1416.500" cy="807.400" r="3" fill="#18c018" stroke="#0a800a" stroke-width="0.500"/><circle cx="1410.700" cy="801.200" r="1" fill="#a0ffa0"/><circle cx="1415.700" cy="806.600" r="1" fill="#a0ffa0"/>
<path d="M1403.5 794.0 L1407.0 797.5" stroke="#000" stroke-width="0.9"/><path d="M1408.8 799.3 L1405.7 798.7 L1408.2 796.2 Z" fill="#000"/>
<path d="M1424.5 815.8 L1421.0 812.3" stroke="#000" stroke-width="0.9"/><path d="M1419.2 810.5 L1422.3 811.1 L1419.8 813.6 Z" fill="#000"/>
<rect x="1435" y="794" width="2" height="2" fill="#1a1a1a"/><rect x="1435" y="800" width="2" height="2" fill="#1a1a1a"/><rect x="1435" y="806" width="2" height="2" fill="#1a1a1a"/><rect x="1435" y="812" width="2" height="2" fill="#1a1a1a"/>
<path d="M1447 801.500 C1449 798.500 1452 798.500 1453 801.500 C1454 804.500 1455 808 1456.500 809.800 C1458 811.500 1460.500 811 1462 808.500" stroke="#6e6e6e" stroke-width="1.300" fill="none"/><path d="M1462.300 799.500 C1459 798.500 1457.500 800.500 1454.500 805 C1452 809 1450 811.500 1446.800 810.500" stroke="#6e6e6e" stroke-width="1" fill="none"/>
<text x="1471.600" y="809.800" font-size="9.900" fill="#585858" font-family="Liberation Sans, sans-serif" letter-spacing="-0.400">[A<tspan font-size="6.500" dy="2.200">1</tspan><tspan dy="-2.200">A</tspan><tspan font-size="6.500" dy="2.200">2</tspan><tspan dy="-2.200">]</tspan></text>
<text x="1500.800" y="809.300" font-size="11" fill="#5a5a5a" font-family="Liberation Sans, sans-serif" textLength="21.500" lengthAdjust="spacingAndGlyphs">‘abc’</text>
<text x="1539" y="803.300" font-size="10" font-style="italic" text-anchor="middle" fill="#5e5e5e" stroke="#5e5e5e" stroke-width="0.250" font-family="Liberation Serif, serif">∂</text><path d="M1532 804.800 H1546.500" stroke="#5e5e5e" stroke-width="1"/><text x="1539.300" y="814" font-size="10.500" font-style="italic" text-anchor="middle" fill="#5e5e5e" stroke="#5e5e5e" stroke-width="0.250" font-family="Liberation Serif, serif">∂t</text>
<rect x="1556" y="799.500" width="10.800" height="11.200" fill="#14c428" stroke="#0a8a18" stroke-width="0.600"/><path d="M1566.800 805.200 H1572" stroke="#000" stroke-width="1.600"/><path d="M1572 799.500 L1578.300 805.200 L1572 810.800 Z" fill="#f01010"/>
<path d="M1588.500 800 H1584.800 V811.500 H1592.500 M1592.500 809.500 V813.500 M1601.500 800 H1605.300 V811.500 H1597.500 M1597.500 809.500 V813.500" stroke="#000" stroke-width="1.200" fill="none"/>
<rect x="1586" y="796.800" width="18" height="5.800" rx="2.900" fill="#f8e000" stroke="#000" stroke-width="1"/><rect x="1590.500" y="797.300" width="9" height="4.800" fill="#f8a000"/><rect x="1593.300" y="797.300" width="3.400" height="4.800" fill="#f02000"/>
<rect x="1620.300" y="795.200" width="5.200" height="20.300" fill="#7e7eb6" stroke="#3a3a78" stroke-width="0.800"/>
<path d="M1611.800 797.8 H1616" stroke="#e01010" stroke-width="1.800"/><path d="M1615 795.0 L1619.500 797.8 L1615 800.5999999999999Z" fill="#e01010"/>
<path d="M1611.800 805.2 H1616" stroke="#e01010" stroke-width="1.800"/><path d="M1615 802.4000000000001 L1619.500 805.2 L1615 808.0Z" fill="#e01010"/>
<path d="M1611.800 812.6 H1616" stroke="#e01010" stroke-width="1.800"/><path d="M1615 809.8000000000001 L1619.500 812.6 L1615 815.4Z" fill="#e01010"/>
<path d="M1627 805.200 H1630.500" stroke="#109010" stroke-width="1.800"/><path d="M1629.800 802.200 L1634.300 805.200 L1629.800 808.200Z" fill="#109010"/>
<rect x="1644" y="794" width="2" height="2" fill="#1a1a1a"/><rect x="1644" y="800" width="2" height="2" fill="#1a1a1a"/><rect x="1644" y="806" width="2" height="2" fill="#1a1a1a"/><rect x="1644" y="812" width="2" height="2" fill="#1a1a1a"/>
<path d="M1653.0 797.0 L1654.8 802.3 L1656.7 796.7 L1658.5 802.4 L1660.4 797.4 L1662.2 802.9 L1664.1 795.8 L1665.9 803.6 L1667.8 796.0 L1669.6 802.5 L1671.5 796.5 L1673.3 802.6" stroke="#18a030" stroke-width="1.100" fill="none" stroke-linejoin="round"/>
<path d="M1653.0 807.7 L1654.8 812.6 L1656.7 807.6 L1658.5 814.1 L1660.4 806.5 L1662.2 813.9 L1664.1 806.6 L1665.9 812.7 L1667.8 807.4 L1669.6 813.5 L1671.5 806.7 L1673.3 813.9" stroke="#1868e8" stroke-width="1.100" fill="none" stroke-linejoin="round"/>
<rect x="1681.200" y="794.300" width="15.600" height="13" fill="#fff" stroke="#000" stroke-width="1"/><rect x="1681.700" y="794.800" width="14.600" height="2.600" fill="#80c030"/><path d="M1681.200 797.500 h15.600 M1681.200 800 h15.600 M1681.200 802.500 h15.600 M1681.200 805 h15.600 M1686.400 794.300 v13 M1691.600 794.300 v13" stroke="#000" stroke-width="0.900"/>
<path d="M1690 800 v12.500 a6.500 2.300 0 0 0 13 0 v-12.500z" fill="#fff" stroke="#000" stroke-width="1"/><ellipse cx="1696.500" cy="800" rx="6.500" ry="2.300" fill="#e8e8e8" stroke="#000" stroke-width="1"/>
<path d="M1689.500 810.500 a4.200 4.200 0 0 1 7 -3.200 M1697.800 808.500 a4.200 4.200 0 0 1 -7 3.200" fill="none" stroke="#000" stroke-width="1.800"/><path d="M1697.800 804.500 v4 h-4z M1689.500 814.500 v-4 h4z" fill="#000"/><circle cx="1693.600" cy="809.500" r="6" fill="none" stroke="#fff" stroke-width="0"/>
<path d="M1717 797 c-2.600 0 -3.200 1 -3.200 3 v2.800 c0 1.800 -0.800 2.500 -2.300 2.700 c1.500 0.200 2.300 0.900 2.300 2.700 v2.800 c0 2 0.600 3 3.200 3 M1723.500 797 c2.600 0 3.200 1 3.200 3 v2.800 c0 1.800 0.800 2.500 2.300 2.700 c-1.500 0.200 -2.300 0.900 -2.300 2.700 v2.800 c0 2 -0.600 3 -3.200 3" stroke="#4c4c4c" stroke-width="1.500" fill="none"/>
<rect x="1737" y="795.500" width="21.800" height="19" fill="#f4f4f4" stroke="#000" stroke-width="1.200"/><rect x="1737.600" y="796.100" width="20.600" height="3" fill="#86c832"/>
<path d="M1737 799.300 h21.800 M1737 802.400 h21.800 M1737 805.500 h21.800 M1737 808.600 h21.800 M1737 811.700 h21.800" stroke="#000" stroke-width="1.100"/><path d="M1744.300 795.500 v19 M1751.600 795.500 v19" stroke="#000" stroke-width="1.100"/></svg>
<div class="abs" style="left:499px;top:794.500px;width:20px;height:20px;border-radius:50%;box-sizing:border-box;border:1px solid #8a8a8a;background:radial-gradient(circle,rgba(255,255,255,.75) 0,rgba(255,255,255,0) 55%),conic-gradient(from 0deg,#00ffff,#00ff00 60deg,#ffff00 120deg,#ff0000 180deg,#ff00ff 240deg,#0000ff 300deg,#00ffff 360deg)"></div>
<div class="status">Ready.</div>
</body></html>
